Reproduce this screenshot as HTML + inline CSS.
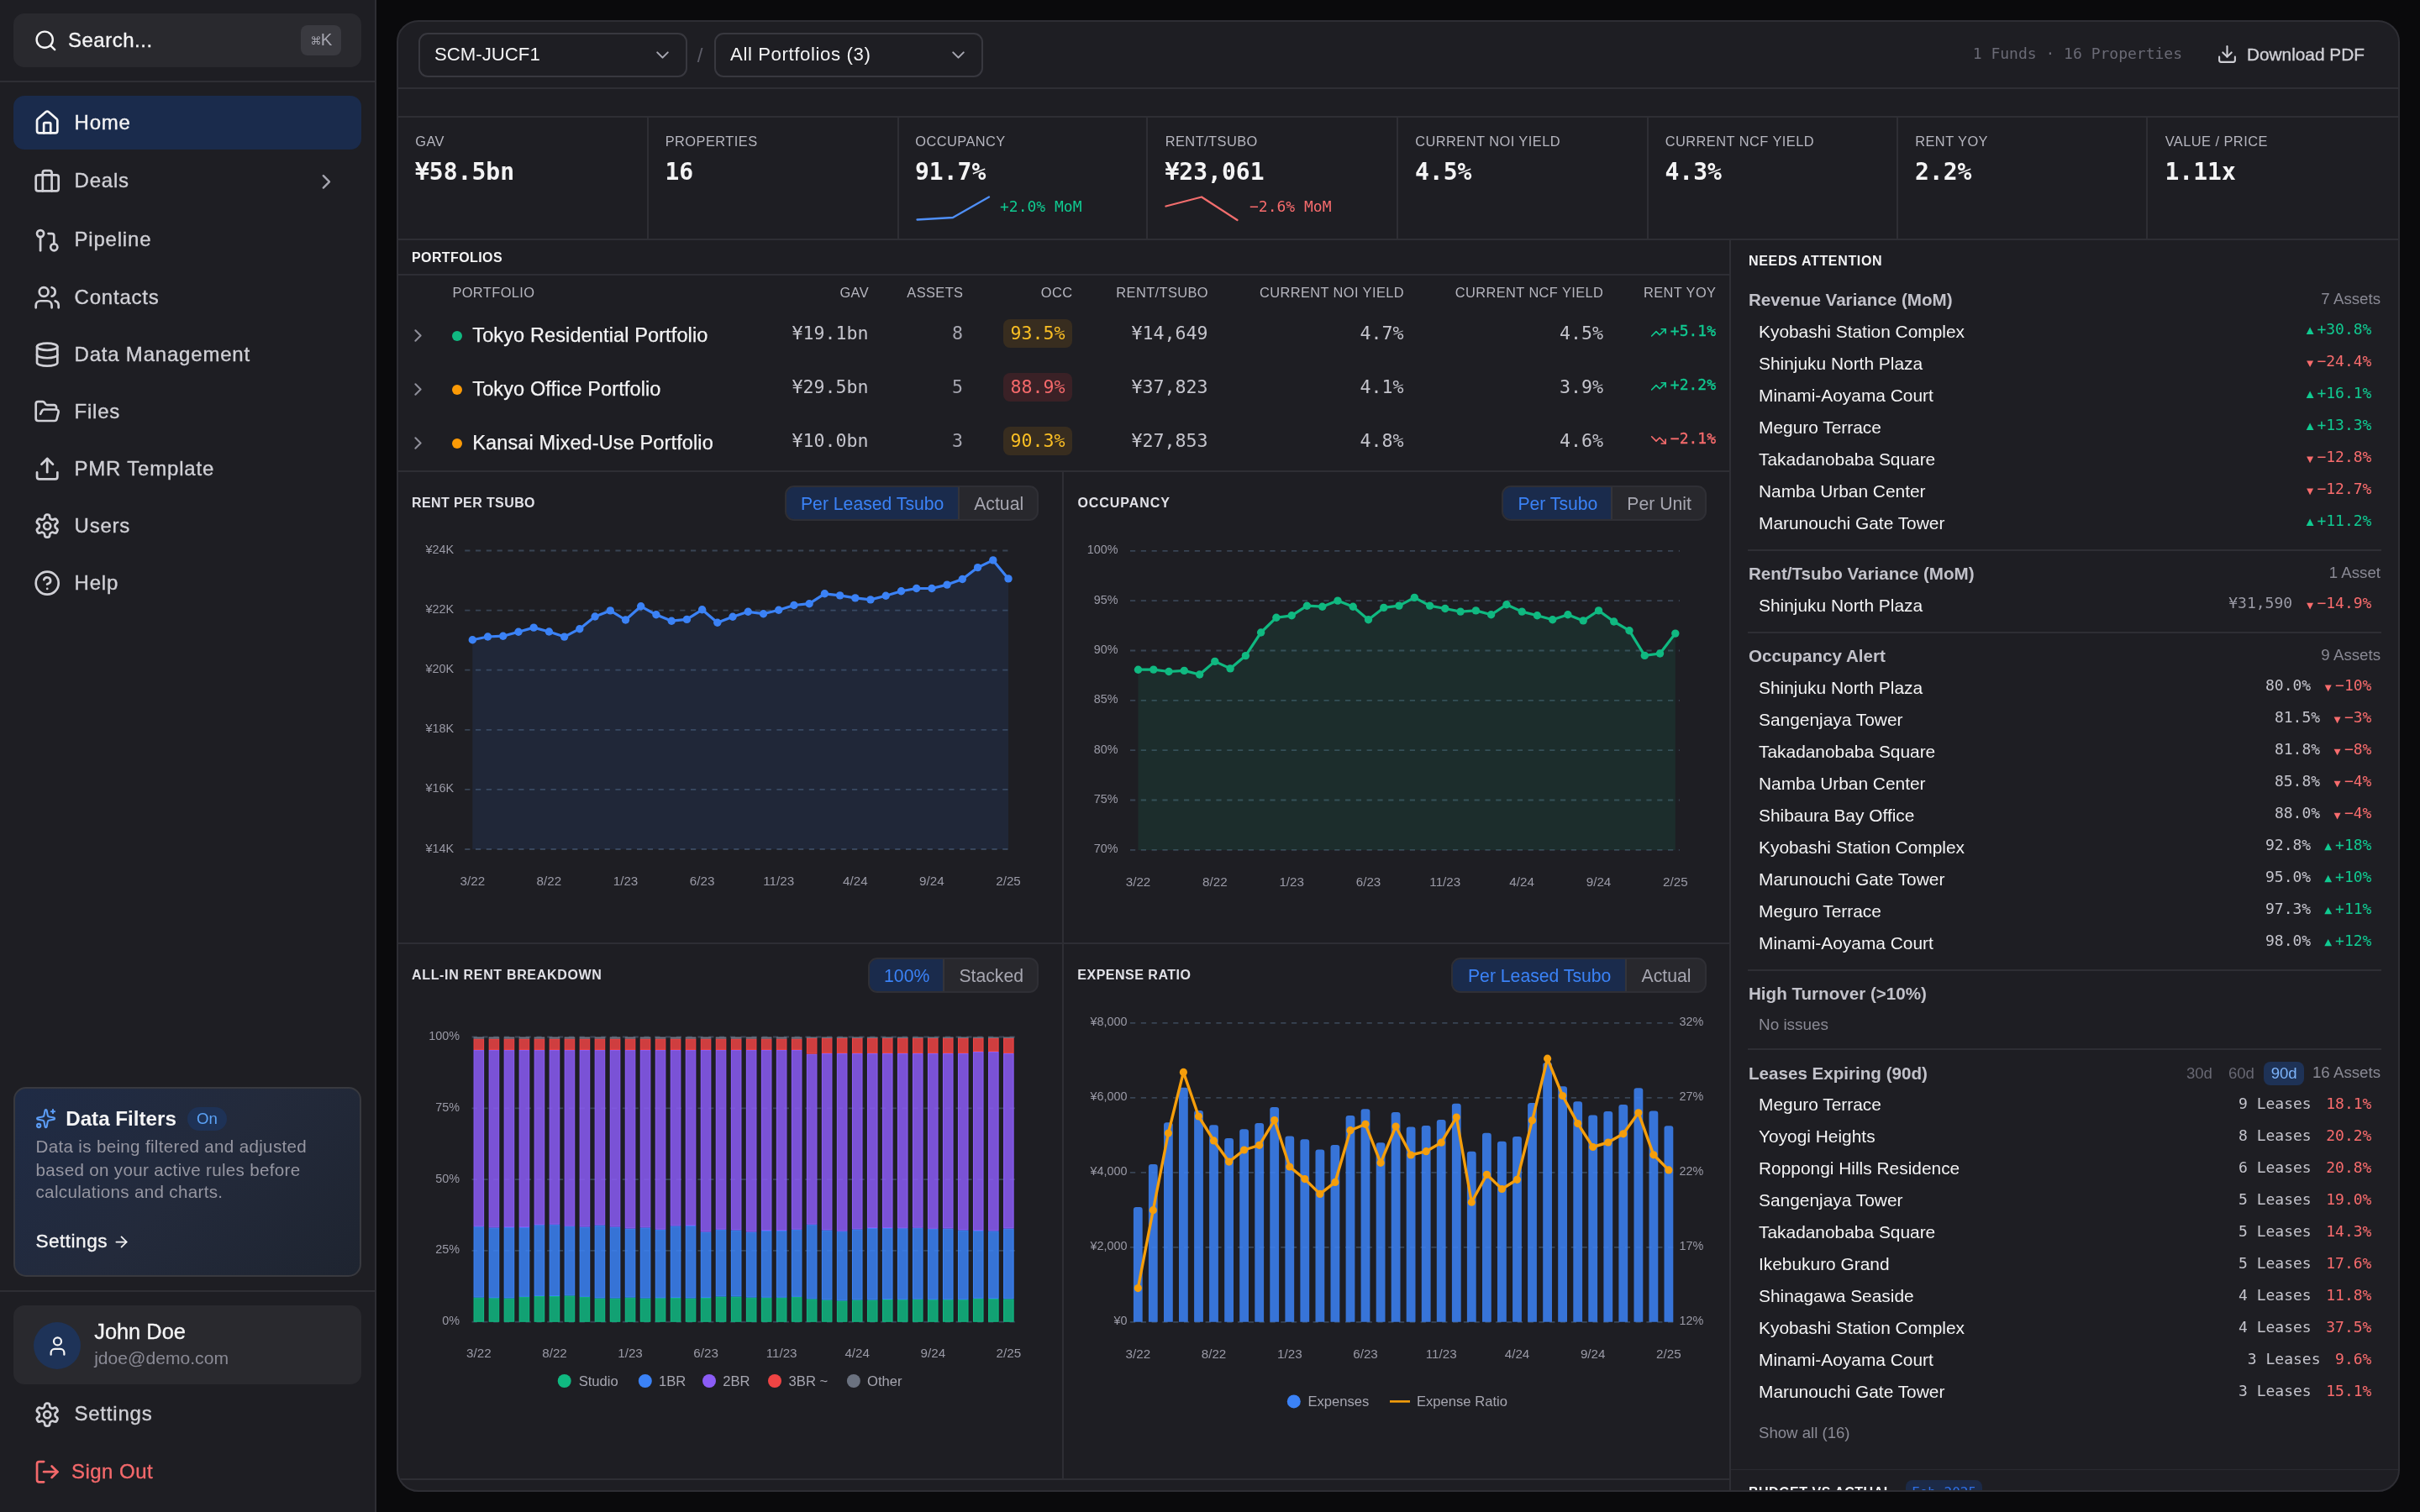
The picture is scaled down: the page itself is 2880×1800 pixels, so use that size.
<!DOCTYPE html>
<html lang="en"><head><meta charset="utf-8"><title>Portfolio Dashboard</title>
<style>
html,body{margin:0;padding:0;}
body{width:2880px;height:1800px;overflow:hidden;background:#0a0a0c;font-family:"Liberation Sans", sans-serif;position:relative;}
.b{position:absolute;}
.t{position:absolute;white-space:nowrap;}
#root{position:absolute;left:0;top:0;width:2880px;height:1800px;will-change:transform;}
</style></head><body><div id="root">
<div class="b" style="left:0.0px;top:0.0px;width:446.0px;height:1800.0px;background:#1e1e23;border-right:2px solid #2e2e34;"></div>
<div class="b" style="left:16.0px;top:16.0px;width:414.0px;height:64.0px;background:#29292e;border-radius:13px;"></div>
<svg class="b" style="left:39.6px;top:33.6px" width="28.8" height="28.8" viewBox="0 0 24 24" fill="none" stroke="#f4f4f5" stroke-width="2" stroke-linecap="round" stroke-linejoin="round"><circle cx="11" cy="11" r="8"/><path d="m21 21-4.3-4.3"/></svg>
<span class="t" style="top:31.5px;font-size:24px;line-height:31px;color:#f4f4f5;letter-spacing:0.5px;left:81.0px;-webkit-text-stroke:0.35px currentColor;">Search...</span>
<div class="b" style="left:358.0px;top:30.0px;width:48.0px;height:36.0px;background:#3a3a40;border-radius:8px;"></div>
<span class="t" style="top:40.0px;font-size:13px;line-height:17px;color:#a6a6b0;left:375.7px;transform:translateX(-50%);font-family:'DejaVu Sans','Liberation Sans',sans-serif;">⌘</span>
<span class="t" style="top:33.8px;font-size:20.4px;line-height:27px;color:#a6a6b0;left:388.6px;transform:translateX(-50%);">K</span>
<div class="b" style="left:0.0px;top:96.0px;width:446.0px;height:2.0px;background:#2e2e34;"></div>
<div class="b" style="left:16.0px;top:114.0px;width:414.0px;height:64.0px;background:#1a2b4c;border-radius:13px;"></div>
<svg class="b" style="left:39.8px;top:129.8px" width="32.4" height="32.4" viewBox="0 0 24 24" fill="none" stroke="#f4f4f5" stroke-width="2" stroke-linecap="round" stroke-linejoin="round"><path d="M15 21v-8a1 1 0 0 0-1-1h-4a1 1 0 0 0-1 1v8"/><path d="M3 10a2 2 0 0 1 .709-1.528l7-5.999a2 2 0 0 1 2.582 0l7 5.999A2 2 0 0 1 21 10v9a2 2 0 0 1-2 2H5a2 2 0 0 1-2-2z"/></svg>
<span class="t" style="top:129.5px;font-size:24px;line-height:31px;color:#f4f4f5;letter-spacing:0.8px;left:88.5px;-webkit-text-stroke:0.35px currentColor;">Home</span>
<svg class="b" style="left:39.8px;top:198.5px" width="32.4" height="32.4" viewBox="0 0 24 24" fill="none" stroke="#d0d0d6" stroke-width="2" stroke-linecap="round" stroke-linejoin="round"><rect width="20" height="14" x="2" y="7" rx="2" ry="2"/><path d="M16 21V5a2 2 0 0 0-2-2h-4a2 2 0 0 0-2 2v16"/></svg>
<span class="t" style="top:198.9px;font-size:24px;line-height:31px;color:#d0d0d6;letter-spacing:0.8px;left:88.5px;-webkit-text-stroke:0.35px currentColor;">Deals</span>
<svg class="b" style="left:39.8px;top:269.5px" width="32.4" height="32.4" viewBox="0 0 24 24" fill="none" stroke="#d0d0d6" stroke-width="2" stroke-linecap="round" stroke-linejoin="round"><circle cx="18" cy="18" r="3"/><circle cx="6" cy="6" r="3"/><path d="M13 6h3a2 2 0 0 1 2 2v7"/><line x1="6" x2="6" y1="9" y2="21"/></svg>
<span class="t" style="top:269.2px;font-size:24px;line-height:31px;color:#d0d0d6;letter-spacing:0.8px;left:88.5px;-webkit-text-stroke:0.35px currentColor;">Pipeline</span>
<svg class="b" style="left:39.8px;top:338.0px" width="32.4" height="32.4" viewBox="0 0 24 24" fill="none" stroke="#d0d0d6" stroke-width="2" stroke-linecap="round" stroke-linejoin="round"><path d="M16 21v-2a4 4 0 0 0-4-4H6a4 4 0 0 0-4 4v2"/><circle cx="9" cy="7" r="4"/><path d="M22 21v-2a4 4 0 0 0-3-3.87"/><path d="M16 3.13a4 4 0 0 1 0 7.75"/></svg>
<span class="t" style="top:337.7px;font-size:24px;line-height:31px;color:#d0d0d6;letter-spacing:0.8px;left:88.5px;-webkit-text-stroke:0.35px currentColor;">Contacts</span>
<svg class="b" style="left:39.8px;top:405.9px" width="32.4" height="32.4" viewBox="0 0 24 24" fill="none" stroke="#d0d0d6" stroke-width="2" stroke-linecap="round" stroke-linejoin="round"><ellipse cx="12" cy="5" rx="9" ry="3"/><path d="M3 5V19A9 3 0 0 0 21 19V5"/><path d="M3 12A9 3 0 0 0 21 12"/></svg>
<span class="t" style="top:405.6px;font-size:24px;line-height:31px;color:#d0d0d6;letter-spacing:0.8px;left:88.5px;-webkit-text-stroke:0.35px currentColor;">Data Management</span>
<svg class="b" style="left:39.8px;top:474.0px" width="32.4" height="32.4" viewBox="0 0 24 24" fill="none" stroke="#d0d0d6" stroke-width="2" stroke-linecap="round" stroke-linejoin="round"><path d="m6 14 1.5-2.9A2 2 0 0 1 9.24 10H20a2 2 0 0 1 1.94 2.5l-1.54 6a2 2 0 0 1-1.95 1.5H4a2 2 0 0 1-2-2V5a2 2 0 0 1 2-2h3.9a2 2 0 0 1 1.69.9l.81 1.2a2 2 0 0 0 1.67.9H18a2 2 0 0 1 2 2v2"/></svg>
<span class="t" style="top:473.7px;font-size:24px;line-height:31px;color:#d0d0d6;letter-spacing:0.8px;left:88.5px;-webkit-text-stroke:0.35px currentColor;">Files</span>
<svg class="b" style="left:39.8px;top:542.1px" width="32.4" height="32.4" viewBox="0 0 24 24" fill="none" stroke="#d0d0d6" stroke-width="2" stroke-linecap="round" stroke-linejoin="round"><path d="M21 15v4a2 2 0 0 1-2 2H5a2 2 0 0 1-2-2v-4"/><polyline points="17 8 12 3 7 8"/><line x1="12" x2="12" y1="3" y2="15"/></svg>
<span class="t" style="top:541.8px;font-size:24px;line-height:31px;color:#d0d0d6;letter-spacing:0.8px;left:88.5px;-webkit-text-stroke:0.35px currentColor;">PMR Template</span>
<svg class="b" style="left:39.8px;top:610.1px" width="32.4" height="32.4" viewBox="0 0 24 24" fill="none" stroke="#d0d0d6" stroke-width="2" stroke-linecap="round" stroke-linejoin="round"><path d="M12.22 2h-.44a2 2 0 0 0-2 2v.18a2 2 0 0 1-1 1.73l-.43.25a2 2 0 0 1-2 0l-.15-.08a2 2 0 0 0-2.73.73l-.22.38a2 2 0 0 0 .73 2.73l.15.1a2 2 0 0 1 1 1.72v.51a2 2 0 0 1-1 1.74l-.15.09a2 2 0 0 0-.73 2.73l.22.38a2 2 0 0 0 2.73.73l.15-.08a2 2 0 0 1 2 0l.43.25a2 2 0 0 1 1 1.73V20a2 2 0 0 0 2 2h.44a2 2 0 0 0 2-2v-.18a2 2 0 0 1 1-1.73l.43-.25a2 2 0 0 1 2 0l.15.08a2 2 0 0 0 2.73-.73l.22-.39a2 2 0 0 0-.73-2.73l-.15-.08a2 2 0 0 1-1-1.74v-.5a2 2 0 0 1 1-1.74l.15-.09a2 2 0 0 0 .73-2.73l-.22-.38a2 2 0 0 0-2.73-.73l-.15.08a2 2 0 0 1-2 0l-.43-.25a2 2 0 0 1-1-1.73V4a2 2 0 0 0-2-2z"/><circle cx="12" cy="12" r="3"/></svg>
<span class="t" style="top:609.8px;font-size:24px;line-height:31px;color:#d0d0d6;letter-spacing:0.8px;left:88.5px;-webkit-text-stroke:0.35px currentColor;">Users</span>
<svg class="b" style="left:39.8px;top:678.1px" width="32.4" height="32.4" viewBox="0 0 24 24" fill="none" stroke="#d0d0d6" stroke-width="2" stroke-linecap="round" stroke-linejoin="round"><circle cx="12" cy="12" r="10"/><path d="M9.09 9a3 3 0 0 1 5.83 1c0 2-3 3-3 3"/><path d="M12 17h.01"/></svg>
<span class="t" style="top:677.8px;font-size:24px;line-height:31px;color:#d0d0d6;letter-spacing:0.8px;left:88.5px;-webkit-text-stroke:0.35px currentColor;">Help</span>
<svg class="b" style="left:373.6px;top:201.6px" width="28.8" height="28.8" viewBox="0 0 24 24" fill="none" stroke="#a6a6b0" stroke-width="2" stroke-linecap="round" stroke-linejoin="round"><path d="m9 18 6-6-6-6"/></svg>
<div class="b" style="left:16.0px;top:1294.0px;width:414.0px;height:226.0px;box-sizing:border-box;border:2px solid #38393f;border-radius:15px;background:linear-gradient(135deg,#1f2b45 0%,#232a3b 50%,#1e2430 100%);"></div>
<svg class="b" style="left:41.6px;top:1319.4px" width="25.2" height="25.2" viewBox="0 0 24 24" fill="none" stroke="#5b9cf5" stroke-width="2" stroke-linecap="round" stroke-linejoin="round"><path d="M11.017 2.814a1 1 0 0 1 1.966 0l1.051 5.558a2 2 0 0 0 1.594 1.594l5.558 1.051a1 1 0 0 1 0 1.966l-5.558 1.051a2 2 0 0 0-1.594 1.594l-1.051 5.558a1 1 0 0 1-1.966 0l-1.051-5.558a2 2 0 0 0-1.594-1.594l-5.558-1.051a1 1 0 0 1 0-1.966l5.558-1.051a2 2 0 0 0 1.594-1.594z"/><path d="M20 2v4"/><path d="M22 4h-4"/><circle cx="4" cy="20" r="2"/></svg>
<span class="t" style="top:1315.5px;font-size:24.2px;line-height:31px;color:#f4f4f5;font-weight:700;left:78.2px;">Data Filters</span>
<div class="b" style="left:222.6px;top:1318.4px;width:47.6px;height:27.8px;background:#1e3256;border-radius:14px;"></div>
<span class="t" style="top:1320.2px;font-size:18.6px;line-height:24px;color:#5ba2f7;left:246.4px;transform:translateX(-50%);">On</span>
<span class="t" style="top:1351.1px;font-size:20.6px;line-height:27px;color:#9696a1;letter-spacing:0.32px;left:42.5px;">Data is being filtered and adjusted</span>
<span class="t" style="top:1378.9px;font-size:20.6px;line-height:27px;color:#9696a1;letter-spacing:0.32px;left:42.5px;">based on your active rules before</span>
<span class="t" style="top:1405.3px;font-size:20.6px;line-height:27px;color:#9696a1;letter-spacing:0.32px;left:42.5px;">calculations and charts.</span>
<span class="t" style="top:1462.7px;font-size:22.6px;line-height:29px;color:#f4f4f5;letter-spacing:0.5px;left:42.4px;-webkit-text-stroke:0.35px currentColor;">Settings</span>
<svg class="b" style="left:133.7px;top:1467.8px" width="21" height="21" viewBox="0 0 24 24" fill="none" stroke="#f4f4f5" stroke-width="2" stroke-linecap="round" stroke-linejoin="round"><path d="M5 12h14"/><path d="m12 5 7 7-7 7"/></svg>
<div class="b" style="left:0.0px;top:1536.0px;width:446.0px;height:2.0px;background:#2e2e34;"></div>
<div class="b" style="left:16.0px;top:1554.0px;width:414.0px;height:94.0px;background:#29292e;border-radius:13px;"></div>
<div class="b" style="left:40.0px;top:1574.0px;width:56.0px;height:56.0px;background:#1e3358;border-radius:50%;"></div>
<svg class="b" style="left:54.5px;top:1588.5px" width="27" height="27" viewBox="0 0 24 24" fill="none" stroke="#f4f4f5" stroke-width="2" stroke-linecap="round" stroke-linejoin="round"><path d="M19 21v-2a4 4 0 0 0-4-4H9a4 4 0 0 0-4 4v2"/><circle cx="12" cy="7" r="4"/></svg>
<span class="t" style="top:1569.1px;font-size:25.4px;line-height:33px;color:#f4f4f5;left:112.2px;-webkit-text-stroke:0.35px currentColor;">John Doe</span>
<span class="t" style="top:1602.5px;font-size:21.1px;line-height:27px;color:#8a8a95;left:112.2px;">jdoe@demo.com</span>
<svg class="b" style="left:39.8px;top:1667.5px" width="32.4" height="32.4" viewBox="0 0 24 24" fill="none" stroke="#d0d0d6" stroke-width="2" stroke-linecap="round" stroke-linejoin="round"><path d="M12.22 2h-.44a2 2 0 0 0-2 2v.18a2 2 0 0 1-1 1.73l-.43.25a2 2 0 0 1-2 0l-.15-.08a2 2 0 0 0-2.73.73l-.22.38a2 2 0 0 0 .73 2.73l.15.1a2 2 0 0 1 1 1.72v.51a2 2 0 0 1-1 1.74l-.15.09a2 2 0 0 0-.73 2.73l.22.38a2 2 0 0 0 2.73.73l.15-.08a2 2 0 0 1 2 0l.43.25a2 2 0 0 1 1 1.73V20a2 2 0 0 0 2 2h.44a2 2 0 0 0 2-2v-.18a2 2 0 0 1 1-1.73l.43-.25a2 2 0 0 1 2 0l.15.08a2 2 0 0 0 2.73-.73l.22-.39a2 2 0 0 0-.73-2.73l-.15-.08a2 2 0 0 1-1-1.74v-.5a2 2 0 0 1 1-1.74l.15-.09a2 2 0 0 0 .73-2.73l-.22-.38a2 2 0 0 0-2.73-.73l-.15.08a2 2 0 0 1-2 0l-.43-.25a2 2 0 0 1-1-1.73V4a2 2 0 0 0-2-2z"/><circle cx="12" cy="12" r="3"/></svg>
<span class="t" style="top:1667.2px;font-size:24px;line-height:31px;color:#d0d0d6;letter-spacing:0.8px;left:88.4px;-webkit-text-stroke:0.35px currentColor;">Settings</span>
<svg class="b" style="left:39.8px;top:1735.8px" width="32.4" height="32.4" viewBox="0 0 24 24" fill="none" stroke="#f4696b" stroke-width="2" stroke-linecap="round" stroke-linejoin="round"><path d="M9 21H5a2 2 0 0 1-2-2V5a2 2 0 0 1 2-2h4"/><polyline points="16 17 21 12 16 7"/><line x1="21" x2="9" y1="12" y2="12"/></svg>
<span class="t" style="top:1735.5px;font-size:24px;line-height:31px;color:#f4696b;letter-spacing:0.5px;left:84.9px;-webkit-text-stroke:0.35px currentColor;">Sign Out</span>
<div class="b" style="left:472.0px;top:24.0px;width:2384.0px;height:1752.0px;box-sizing:border-box;background:#1e1e23;border:2px solid #2e2e34;border-radius:26px;"></div>
<div class="b" id="panel" style="left:474px;top:26px;width:2380px;height:1748px;border-radius:24px;overflow:hidden;">
<div class="b" style="left:-474px;top:-26px;width:2880px;height:1800px;">
<div class="b" style="left:474.0px;top:104.0px;width:2380.0px;height:2.0px;background:#2e2e34;"></div>
<div class="b" style="left:474.0px;top:138.0px;width:2380.0px;height:2.0px;background:#2e2e34;"></div>
<div class="b" style="left:474.0px;top:284.0px;width:2380.0px;height:2.0px;background:#2e2e34;"></div>
<div class="b" style="left:498.0px;top:38.5px;width:320.0px;height:53.0px;box-sizing:border-box;border:2px solid #38383f;border-radius:11px;"></div>
<span class="t" style="top:49.5px;font-size:22.2px;line-height:29px;color:#f4f4f5;left:517.0px;">SCM-JUCF1</span>
<svg class="b" style="left:775.5px;top:52.5px" width="25" height="25" viewBox="0 0 24 24" fill="none" stroke="#a6a6b0" stroke-width="2" stroke-linecap="round" stroke-linejoin="round"><path d="m6 9 6 6 6-6"/></svg>
<span class="t" style="top:49.5px;font-size:24px;line-height:31px;color:#5d5d68;left:833.0px;transform:translateX(-50%);">/</span>
<div class="b" style="left:850.0px;top:38.5px;width:320.0px;height:53.0px;box-sizing:border-box;border:2px solid #38383f;border-radius:11px;"></div>
<span class="t" style="top:49.5px;font-size:22.2px;line-height:29px;color:#f4f4f5;letter-spacing:0.6px;left:869.0px;">All Portfolios (3)</span>
<svg class="b" style="left:1127.5px;top:52.5px" width="25" height="25" viewBox="0 0 24 24" fill="none" stroke="#a6a6b0" stroke-width="2" stroke-linecap="round" stroke-linejoin="round"><path d="m6 9 6 6 6-6"/></svg>
<span class="t" style="top:51.5px;font-size:18px;line-height:23px;color:#6a6a75;font-family:'DejaVu Sans Mono','Liberation Mono',monospace;right:283.0px;">1 Funds · 16 Properties</span>
<svg class="b" style="left:2637.5px;top:51.5px" width="25" height="25" viewBox="0 0 24 24" fill="none" stroke="#d0d0d6" stroke-width="2" stroke-linecap="round" stroke-linejoin="round"><path d="M21 15v4a2 2 0 0 1-2 2H5a2 2 0 0 1-2-2v-4"/><polyline points="7 10 12 15 17 10"/><line x1="12" x2="12" y1="15" y2="3"/></svg>
<span class="t" style="top:51.0px;font-size:20.8px;line-height:27px;color:#d0d0d6;left:2674.0px;-webkit-text-stroke:0.35px currentColor;">Download PDF</span>
<span class="t" style="top:157.5px;font-size:16.4px;line-height:21px;color:#b6b6bf;letter-spacing:0.45px;left:494.2px;">GAV</span>
<span class="t" style="top:187.0px;font-size:28px;line-height:36px;color:#f4f4f5;font-weight:700;font-family:'DejaVu Sans Mono','Liberation Mono',monospace;left:494.0px;">¥58.5bn</span>
<div class="b" style="left:769.7px;top:140.0px;width:2.0px;height:144.0px;background:#2e2e34;"></div>
<span class="t" style="top:157.5px;font-size:16.4px;line-height:21px;color:#b6b6bf;letter-spacing:0.45px;left:791.7px;">PROPERTIES</span>
<span class="t" style="top:187.0px;font-size:28px;line-height:36px;color:#f4f4f5;font-weight:700;font-family:'DejaVu Sans Mono','Liberation Mono',monospace;left:791.5px;">16</span>
<div class="b" style="left:1068.2px;top:140.0px;width:2.0px;height:144.0px;background:#2e2e34;"></div>
<span class="t" style="top:157.5px;font-size:16.4px;line-height:21px;color:#b6b6bf;letter-spacing:0.45px;left:1089.2px;">OCCUPANCY</span>
<span class="t" style="top:187.0px;font-size:28px;line-height:36px;color:#f4f4f5;font-weight:700;font-family:'DejaVu Sans Mono','Liberation Mono',monospace;left:1089.0px;">91.7%</span>
<div class="b" style="left:1364.1px;top:140.0px;width:2.0px;height:144.0px;background:#2e2e34;"></div>
<span class="t" style="top:157.5px;font-size:16.4px;line-height:21px;color:#b6b6bf;letter-spacing:0.45px;left:1386.7px;">RENT/TSUBO</span>
<span class="t" style="top:187.0px;font-size:28px;line-height:36px;color:#f4f4f5;font-weight:700;font-family:'DejaVu Sans Mono','Liberation Mono',monospace;left:1386.5px;">¥23,061</span>
<div class="b" style="left:1661.8px;top:140.0px;width:2.0px;height:144.0px;background:#2e2e34;"></div>
<span class="t" style="top:157.5px;font-size:16.4px;line-height:21px;color:#b6b6bf;letter-spacing:0.45px;left:1684.2px;">CURRENT NOI YIELD</span>
<span class="t" style="top:187.0px;font-size:28px;line-height:36px;color:#f4f4f5;font-weight:700;font-family:'DejaVu Sans Mono','Liberation Mono',monospace;left:1684.0px;">4.5%</span>
<div class="b" style="left:1959.5px;top:140.0px;width:2.0px;height:144.0px;background:#2e2e34;"></div>
<span class="t" style="top:157.5px;font-size:16.4px;line-height:21px;color:#b6b6bf;letter-spacing:0.45px;left:1981.7px;">CURRENT NCF YIELD</span>
<span class="t" style="top:187.0px;font-size:28px;line-height:36px;color:#f4f4f5;font-weight:700;font-family:'DejaVu Sans Mono','Liberation Mono',monospace;left:1981.5px;">4.3%</span>
<div class="b" style="left:2257.2px;top:140.0px;width:2.0px;height:144.0px;background:#2e2e34;"></div>
<span class="t" style="top:157.5px;font-size:16.4px;line-height:21px;color:#b6b6bf;letter-spacing:0.45px;left:2279.2px;">RENT YOY</span>
<span class="t" style="top:187.0px;font-size:28px;line-height:36px;color:#f4f4f5;font-weight:700;font-family:'DejaVu Sans Mono','Liberation Mono',monospace;left:2279.0px;">2.2%</span>
<div class="b" style="left:2553.7px;top:140.0px;width:2.0px;height:144.0px;background:#2e2e34;"></div>
<span class="t" style="top:157.5px;font-size:16.4px;line-height:21px;color:#b6b6bf;letter-spacing:0.45px;left:2576.7px;">VALUE / PRICE</span>
<span class="t" style="top:187.0px;font-size:28px;line-height:36px;color:#f4f4f5;font-weight:700;font-family:'DejaVu Sans Mono','Liberation Mono',monospace;left:2576.5px;">1.11x</span>
<svg class="b" style="left:0;top:0" width="2880" height="300" fill="none" stroke-linecap="round" stroke-linejoin="round" stroke-width="2.3"><polyline stroke="#4f8ff7" points="1091.5,261.5 1134,259 1177,234.5"/><polyline stroke="#f26d6d" points="1387.5,245.5 1430,234.5 1472.5,262"/></svg>
<span class="t" style="top:233.5px;font-size:18px;line-height:23px;color:#10ca91;font-family:'DejaVu Sans Mono','Liberation Mono',monospace;left:1190.0px;">+2.0% MoM</span>
<span class="t" style="top:233.5px;font-size:18px;line-height:23px;color:#f86c6d;font-family:'DejaVu Sans Mono','Liberation Mono',monospace;left:1487.0px;">−2.6% MoM</span>
<div class="b" style="left:2058.0px;top:286.0px;width:2.0px;height:1490.0px;background:#2e2e34;"></div>
<span class="t" style="top:295.8px;font-size:16px;line-height:21px;color:#f4f4f5;font-weight:700;letter-spacing:0.4px;left:490.0px;">PORTFOLIOS</span>
<div class="b" style="left:474.0px;top:326.0px;width:1584.0px;height:2.0px;background:#2e2e34;"></div>
<span class="t" style="top:337.9px;font-size:16.4px;line-height:21px;color:#b6b6bf;letter-spacing:0.4px;left:538.4px;">PORTFOLIO</span>
<span class="t" style="top:337.9px;font-size:16.4px;line-height:21px;color:#b6b6bf;letter-spacing:0.4px;right:1846.0px;">GAV</span>
<span class="t" style="top:337.9px;font-size:16.4px;line-height:21px;color:#b6b6bf;letter-spacing:0.4px;right:1733.6px;">ASSETS</span>
<span class="t" style="top:337.9px;font-size:16.4px;line-height:21px;color:#b6b6bf;letter-spacing:0.4px;right:1603.6px;">OCC</span>
<span class="t" style="top:337.9px;font-size:16.4px;line-height:21px;color:#b6b6bf;letter-spacing:0.4px;right:1442.0px;">RENT/TSUBO</span>
<span class="t" style="top:337.9px;font-size:16.4px;line-height:21px;color:#b6b6bf;letter-spacing:0.4px;right:1209.0px;">CURRENT NOI YIELD</span>
<span class="t" style="top:337.9px;font-size:16.4px;line-height:21px;color:#b6b6bf;letter-spacing:0.4px;right:971.7px;">CURRENT NCF YIELD</span>
<span class="t" style="top:337.9px;font-size:16.4px;line-height:21px;color:#b6b6bf;letter-spacing:0.4px;right:837.6px;">RENT YOY</span>
<svg class="b" style="left:484.9px;top:386.7px" width="25" height="25" viewBox="0 0 24 24" fill="none" stroke="#8e8e99" stroke-width="2" stroke-linecap="round" stroke-linejoin="round"><path d="m9 18 6-6-6-6"/></svg>
<div class="b" style="left:538.0px;top:394.0px;width:12.0px;height:12.0px;background:#10b981;border-radius:50%;"></div>
<span class="t" style="top:383.9px;font-size:23.5px;line-height:31px;color:#f4f4f5;letter-spacing:0.12px;left:562.3px;-webkit-text-stroke:0.25px currentColor;">Tokyo Residential Portfolio</span>
<span class="t" style="top:383.2px;font-size:21.6px;line-height:28px;color:#c4c4cc;font-family:'DejaVu Sans Mono','Liberation Mono',monospace;right:1846.4px;">¥19.1bn</span>
<span class="t" style="top:383.2px;font-size:21.6px;line-height:28px;color:#a6a6b0;font-family:'DejaVu Sans Mono','Liberation Mono',monospace;right:1734.0px;">8</span>
<div class="b" style="left:1194.0px;top:380.2px;width:82.0px;height:34.0px;background:#382d1f;border-radius:8px;"></div>
<span class="t" style="top:383.2px;font-size:21.6px;line-height:28px;color:#fbbf24;font-family:'DejaVu Sans Mono','Liberation Mono',monospace;left:1235.0px;transform:translateX(-50%);">93.5%</span>
<span class="t" style="top:383.2px;font-size:21.6px;line-height:28px;color:#c4c4cc;font-family:'DejaVu Sans Mono','Liberation Mono',monospace;right:1442.4px;">¥14,649</span>
<span class="t" style="top:383.2px;font-size:21.6px;line-height:28px;color:#c4c4cc;font-family:'DejaVu Sans Mono','Liberation Mono',monospace;right:1209.4px;">4.7%</span>
<span class="t" style="top:383.2px;font-size:21.6px;line-height:28px;color:#c4c4cc;font-family:'DejaVu Sans Mono','Liberation Mono',monospace;right:972.1px;">4.5%</span>
<svg class="b" style="left:1964.4px;top:386.1px" width="19.8" height="19.8" viewBox="0 0 24 24" fill="none" stroke="#10ca91" stroke-width="2" stroke-linecap="round" stroke-linejoin="round"><polyline points="22 7 13.5 15.5 8.5 10.5 2 17"/><polyline points="16 7 22 7 22 13"/></svg>
<span class="t" style="top:381.7px;font-size:18px;line-height:23px;color:#10ca91;font-family:'DejaVu Sans Mono','Liberation Mono',monospace;right:838.0px;-webkit-text-stroke:0.3px currentColor;">+5.1%</span>
<svg class="b" style="left:484.9px;top:450.8px" width="25" height="25" viewBox="0 0 24 24" fill="none" stroke="#8e8e99" stroke-width="2" stroke-linecap="round" stroke-linejoin="round"><path d="m9 18 6-6-6-6"/></svg>
<div class="b" style="left:538.0px;top:458.1px;width:12.0px;height:12.0px;background:#fb9a06;border-radius:50%;"></div>
<span class="t" style="top:448.0px;font-size:23.5px;line-height:31px;color:#f4f4f5;letter-spacing:0.12px;left:562.3px;-webkit-text-stroke:0.25px currentColor;">Tokyo Office Portfolio</span>
<span class="t" style="top:447.3px;font-size:21.6px;line-height:28px;color:#c4c4cc;font-family:'DejaVu Sans Mono','Liberation Mono',monospace;right:1846.4px;">¥29.5bn</span>
<span class="t" style="top:447.3px;font-size:21.6px;line-height:28px;color:#a6a6b0;font-family:'DejaVu Sans Mono','Liberation Mono',monospace;right:1734.0px;">5</span>
<div class="b" style="left:1194.0px;top:444.3px;width:82.0px;height:34.0px;background:#3a2126;border-radius:8px;"></div>
<span class="t" style="top:447.3px;font-size:21.6px;line-height:28px;color:#f4696b;font-family:'DejaVu Sans Mono','Liberation Mono',monospace;left:1235.0px;transform:translateX(-50%);">88.9%</span>
<span class="t" style="top:447.3px;font-size:21.6px;line-height:28px;color:#c4c4cc;font-family:'DejaVu Sans Mono','Liberation Mono',monospace;right:1442.4px;">¥37,823</span>
<span class="t" style="top:447.3px;font-size:21.6px;line-height:28px;color:#c4c4cc;font-family:'DejaVu Sans Mono','Liberation Mono',monospace;right:1209.4px;">4.1%</span>
<span class="t" style="top:447.3px;font-size:21.6px;line-height:28px;color:#c4c4cc;font-family:'DejaVu Sans Mono','Liberation Mono',monospace;right:972.1px;">3.9%</span>
<svg class="b" style="left:1964.4px;top:450.2px" width="19.8" height="19.8" viewBox="0 0 24 24" fill="none" stroke="#10ca91" stroke-width="2" stroke-linecap="round" stroke-linejoin="round"><polyline points="22 7 13.5 15.5 8.5 10.5 2 17"/><polyline points="16 7 22 7 22 13"/></svg>
<span class="t" style="top:445.8px;font-size:18px;line-height:23px;color:#10ca91;font-family:'DejaVu Sans Mono','Liberation Mono',monospace;right:838.0px;-webkit-text-stroke:0.3px currentColor;">+2.2%</span>
<svg class="b" style="left:484.9px;top:514.9px" width="25" height="25" viewBox="0 0 24 24" fill="none" stroke="#8e8e99" stroke-width="2" stroke-linecap="round" stroke-linejoin="round"><path d="m9 18 6-6-6-6"/></svg>
<div class="b" style="left:538.0px;top:522.2px;width:12.0px;height:12.0px;background:#fb9a06;border-radius:50%;"></div>
<span class="t" style="top:512.1px;font-size:23.5px;line-height:31px;color:#f4f4f5;letter-spacing:0.12px;left:562.3px;-webkit-text-stroke:0.25px currentColor;">Kansai Mixed-Use Portfolio</span>
<span class="t" style="top:511.4px;font-size:21.6px;line-height:28px;color:#c4c4cc;font-family:'DejaVu Sans Mono','Liberation Mono',monospace;right:1846.4px;">¥10.0bn</span>
<span class="t" style="top:511.4px;font-size:21.6px;line-height:28px;color:#a6a6b0;font-family:'DejaVu Sans Mono','Liberation Mono',monospace;right:1734.0px;">3</span>
<div class="b" style="left:1194.0px;top:508.4px;width:82.0px;height:34.0px;background:#382d1f;border-radius:8px;"></div>
<span class="t" style="top:511.4px;font-size:21.6px;line-height:28px;color:#fbbf24;font-family:'DejaVu Sans Mono','Liberation Mono',monospace;left:1235.0px;transform:translateX(-50%);">90.3%</span>
<span class="t" style="top:511.4px;font-size:21.6px;line-height:28px;color:#c4c4cc;font-family:'DejaVu Sans Mono','Liberation Mono',monospace;right:1442.4px;">¥27,853</span>
<span class="t" style="top:511.4px;font-size:21.6px;line-height:28px;color:#c4c4cc;font-family:'DejaVu Sans Mono','Liberation Mono',monospace;right:1209.4px;">4.8%</span>
<span class="t" style="top:511.4px;font-size:21.6px;line-height:28px;color:#c4c4cc;font-family:'DejaVu Sans Mono','Liberation Mono',monospace;right:972.1px;">4.6%</span>
<svg class="b" style="left:1964.4px;top:514.3px" width="19.8" height="19.8" viewBox="0 0 24 24" fill="none" stroke="#f86c6d" stroke-width="2" stroke-linecap="round" stroke-linejoin="round"><polyline points="22 17 13.5 8.5 8.5 13.5 2 7"/><polyline points="16 17 22 17 22 11"/></svg>
<span class="t" style="top:509.9px;font-size:18px;line-height:23px;color:#f86c6d;font-family:'DejaVu Sans Mono','Liberation Mono',monospace;right:838.0px;-webkit-text-stroke:0.3px currentColor;">−2.1%</span>
<div class="b" style="left:474.0px;top:560.0px;width:1584.0px;height:2.0px;background:#2e2e34;"></div>
<div class="b" style="left:474.0px;top:1122.0px;width:1584.0px;height:2.0px;background:#2e2e34;"></div>
<div class="b" style="left:474.0px;top:1760.0px;width:1584.0px;height:2.0px;background:#2e2e34;"></div>
<div class="b" style="left:1264.0px;top:562.0px;width:2.0px;height:1198.0px;background:#2e2e34;"></div>
<span class="t" style="top:588.0px;font-size:16px;line-height:21px;color:#e2e2e8;font-weight:700;letter-spacing:0.4px;left:490.0px;">RENT PER TSUBO</span>
<div class="b" style="left:933.5px;top:577.5px;width:302.8px;height:42.6px;box-sizing:border-box;background:#28282d;border:2px solid #2f2f35;border-radius:11px;overflow:hidden;"></div>
<div class="b" style="left:935.5px;top:579.5px;width:204.5px;height:38.6px;background:#1a2b4c;border-radius:9px 0 0 9px;"></div>
<div class="b" style="left:1140.0px;top:579.5px;width:2.0px;height:38.6px;background:#34343a;"></div>
<span class="t" style="top:585.6px;font-size:21.2px;line-height:28px;color:#3b82f6;left:1038.2px;transform:translateX(-50%);">Per Leased Tsubo</span>
<span class="t" style="top:585.6px;font-size:21.2px;line-height:28px;color:#a6a6b0;left:1188.7px;transform:translateX(-50%);">Actual</span>
<span class="t" style="top:588.0px;font-size:16px;line-height:21px;color:#e2e2e8;font-weight:700;letter-spacing:0.95px;left:1282.4px;">OCCUPANCY</span>
<div class="b" style="left:1787.4px;top:577.5px;width:243.3px;height:42.6px;box-sizing:border-box;background:#28282d;border:2px solid #2f2f35;border-radius:11px;overflow:hidden;"></div>
<div class="b" style="left:1789.4px;top:579.5px;width:128.0px;height:38.6px;background:#1a2b4c;border-radius:9px 0 0 9px;"></div>
<div class="b" style="left:1917.4px;top:579.5px;width:2.0px;height:38.6px;background:#34343a;"></div>
<span class="t" style="top:585.6px;font-size:21.2px;line-height:28px;color:#3b82f6;left:1853.9px;transform:translateX(-50%);">Per Tsubo</span>
<span class="t" style="top:585.6px;font-size:21.2px;line-height:28px;color:#a6a6b0;left:1974.6px;transform:translateX(-50%);">Per Unit</span>
<span class="t" style="top:1149.8px;font-size:16px;line-height:21px;color:#e2e2e8;font-weight:700;letter-spacing:0.67px;left:490.0px;">ALL-IN RENT BREAKDOWN</span>
<div class="b" style="left:1033.4px;top:1140.2px;width:202.9px;height:41.5px;box-sizing:border-box;background:#28282d;border:2px solid #2f2f35;border-radius:11px;overflow:hidden;"></div>
<div class="b" style="left:1035.4px;top:1142.2px;width:86.6px;height:37.5px;background:#1a2b4c;border-radius:9px 0 0 9px;"></div>
<div class="b" style="left:1122.0px;top:1142.2px;width:2.0px;height:37.5px;background:#34343a;"></div>
<span class="t" style="top:1147.8px;font-size:21.2px;line-height:28px;color:#3b82f6;left:1079.2px;transform:translateX(-50%);">100%</span>
<span class="t" style="top:1147.8px;font-size:21.2px;line-height:28px;color:#a6a6b0;left:1179.7px;transform:translateX(-50%);">Stacked</span>
<span class="t" style="top:1149.8px;font-size:16px;line-height:21px;color:#e2e2e8;font-weight:700;letter-spacing:0.5px;left:1282.3px;">EXPENSE RATIO</span>
<div class="b" style="left:1727.3px;top:1140.2px;width:303.6px;height:41.5px;box-sizing:border-box;background:#28282d;border:2px solid #2f2f35;border-radius:11px;overflow:hidden;"></div>
<div class="b" style="left:1729.3px;top:1142.2px;width:204.8px;height:37.5px;background:#1a2b4c;border-radius:9px 0 0 9px;"></div>
<div class="b" style="left:1934.1px;top:1142.2px;width:2.0px;height:37.5px;background:#34343a;"></div>
<span class="t" style="top:1147.8px;font-size:21.2px;line-height:28px;color:#3b82f6;left:1832.2px;transform:translateX(-50%);">Per Leased Tsubo</span>
<span class="t" style="top:1147.8px;font-size:21.2px;line-height:28px;color:#a6a6b0;left:1983.0px;transform:translateX(-50%);">Actual</span>
<span class="t" style="top:645.0px;font-size:14.4px;line-height:19px;color:#9a9aa6;right:2340.0px;">¥24K</span>
<span class="t" style="top:716.1px;font-size:14.4px;line-height:19px;color:#9a9aa6;right:2340.0px;">¥22K</span>
<span class="t" style="top:787.2px;font-size:14.4px;line-height:19px;color:#9a9aa6;right:2340.0px;">¥20K</span>
<span class="t" style="top:858.3px;font-size:14.4px;line-height:19px;color:#9a9aa6;right:2340.0px;">¥18K</span>
<span class="t" style="top:929.4px;font-size:14.4px;line-height:19px;color:#9a9aa6;right:2340.0px;">¥16K</span>
<span class="t" style="top:1000.5px;font-size:14.4px;line-height:19px;color:#9a9aa6;right:2340.0px;">¥14K</span>
<span class="t" style="top:1039.0px;font-size:15.2px;line-height:20px;color:#9a9aa6;left:562.3px;transform:translateX(-50%);">3/22</span>
<span class="t" style="top:1039.0px;font-size:15.2px;line-height:20px;color:#9a9aa6;left:653.4px;transform:translateX(-50%);">8/22</span>
<span class="t" style="top:1039.0px;font-size:15.2px;line-height:20px;color:#9a9aa6;left:744.5px;transform:translateX(-50%);">1/23</span>
<span class="t" style="top:1039.0px;font-size:15.2px;line-height:20px;color:#9a9aa6;left:835.6px;transform:translateX(-50%);">6/23</span>
<span class="t" style="top:1039.0px;font-size:15.2px;line-height:20px;color:#9a9aa6;left:926.7px;transform:translateX(-50%);">11/23</span>
<span class="t" style="top:1039.0px;font-size:15.2px;line-height:20px;color:#9a9aa6;left:1017.8px;transform:translateX(-50%);">4/24</span>
<span class="t" style="top:1039.0px;font-size:15.2px;line-height:20px;color:#9a9aa6;left:1108.9px;transform:translateX(-50%);">9/24</span>
<span class="t" style="top:1039.0px;font-size:15.2px;line-height:20px;color:#9a9aa6;left:1200.0px;transform:translateX(-50%);">2/25</span>
<span class="t" style="top:645.3px;font-size:14.4px;line-height:19px;color:#9a9aa6;right:1549.5px;">100%</span>
<span class="t" style="top:704.6px;font-size:14.4px;line-height:19px;color:#9a9aa6;right:1549.5px;">95%</span>
<span class="t" style="top:764.0px;font-size:14.4px;line-height:19px;color:#9a9aa6;right:1549.5px;">90%</span>
<span class="t" style="top:823.3px;font-size:14.4px;line-height:19px;color:#9a9aa6;right:1549.5px;">85%</span>
<span class="t" style="top:882.7px;font-size:14.4px;line-height:19px;color:#9a9aa6;right:1549.5px;">80%</span>
<span class="t" style="top:942.0px;font-size:14.4px;line-height:19px;color:#9a9aa6;right:1549.5px;">75%</span>
<span class="t" style="top:1001.4px;font-size:14.4px;line-height:19px;color:#9a9aa6;right:1549.5px;">70%</span>
<span class="t" style="top:1040.0px;font-size:15.2px;line-height:20px;color:#9a9aa6;left:1354.5px;transform:translateX(-50%);">3/22</span>
<span class="t" style="top:1040.0px;font-size:15.2px;line-height:20px;color:#9a9aa6;left:1445.8px;transform:translateX(-50%);">8/22</span>
<span class="t" style="top:1040.0px;font-size:15.2px;line-height:20px;color:#9a9aa6;left:1537.2px;transform:translateX(-50%);">1/23</span>
<span class="t" style="top:1040.0px;font-size:15.2px;line-height:20px;color:#9a9aa6;left:1628.5px;transform:translateX(-50%);">6/23</span>
<span class="t" style="top:1040.0px;font-size:15.2px;line-height:20px;color:#9a9aa6;left:1719.8px;transform:translateX(-50%);">11/23</span>
<span class="t" style="top:1040.0px;font-size:15.2px;line-height:20px;color:#9a9aa6;left:1811.1px;transform:translateX(-50%);">4/24</span>
<span class="t" style="top:1040.0px;font-size:15.2px;line-height:20px;color:#9a9aa6;left:1902.5px;transform:translateX(-50%);">9/24</span>
<span class="t" style="top:1040.0px;font-size:15.2px;line-height:20px;color:#9a9aa6;left:1993.8px;transform:translateX(-50%);">2/25</span>
<span class="t" style="top:1224.0px;font-size:14.4px;line-height:19px;color:#9a9aa6;right:2333.0px;">100%</span>
<span class="t" style="top:1308.8px;font-size:14.4px;line-height:19px;color:#9a9aa6;right:2333.0px;">75%</span>
<span class="t" style="top:1393.6px;font-size:14.4px;line-height:19px;color:#9a9aa6;right:2333.0px;">50%</span>
<span class="t" style="top:1478.4px;font-size:14.4px;line-height:19px;color:#9a9aa6;right:2333.0px;">25%</span>
<span class="t" style="top:1563.2px;font-size:14.4px;line-height:19px;color:#9a9aa6;right:2333.0px;">0%</span>
<span class="t" style="top:1601.0px;font-size:15.2px;line-height:20px;color:#9a9aa6;left:569.9px;transform:translateX(-50%);">3/22</span>
<span class="t" style="top:1601.0px;font-size:15.2px;line-height:20px;color:#9a9aa6;left:660.0px;transform:translateX(-50%);">8/22</span>
<span class="t" style="top:1601.0px;font-size:15.2px;line-height:20px;color:#9a9aa6;left:750.0px;transform:translateX(-50%);">1/23</span>
<span class="t" style="top:1601.0px;font-size:15.2px;line-height:20px;color:#9a9aa6;left:840.1px;transform:translateX(-50%);">6/23</span>
<span class="t" style="top:1601.0px;font-size:15.2px;line-height:20px;color:#9a9aa6;left:930.1px;transform:translateX(-50%);">11/23</span>
<span class="t" style="top:1601.0px;font-size:15.2px;line-height:20px;color:#9a9aa6;left:1020.2px;transform:translateX(-50%);">4/24</span>
<span class="t" style="top:1601.0px;font-size:15.2px;line-height:20px;color:#9a9aa6;left:1110.3px;transform:translateX(-50%);">9/24</span>
<span class="t" style="top:1601.0px;font-size:15.2px;line-height:20px;color:#9a9aa6;left:1200.3px;transform:translateX(-50%);">2/25</span>
<span class="t" style="top:1633.8px;font-size:16.6px;line-height:22px;color:#a6a6b0;left:688.7px;">Studio</span>
<span class="t" style="top:1633.8px;font-size:16.6px;line-height:22px;color:#a6a6b0;left:784.0px;">1BR</span>
<span class="t" style="top:1633.8px;font-size:16.6px;line-height:22px;color:#a6a6b0;left:860.2px;">2BR</span>
<span class="t" style="top:1633.8px;font-size:16.6px;line-height:22px;color:#a6a6b0;left:938.6px;">3BR ~</span>
<span class="t" style="top:1633.8px;font-size:16.6px;line-height:22px;color:#a6a6b0;left:1032.1px;">Other</span>
<span class="t" style="top:1207.4px;font-size:14.4px;line-height:19px;color:#9a9aa6;right:1538.6px;">¥8,000</span>
<span class="t" style="top:1296.4px;font-size:14.4px;line-height:19px;color:#9a9aa6;right:1538.6px;">¥6,000</span>
<span class="t" style="top:1385.3px;font-size:14.4px;line-height:19px;color:#9a9aa6;right:1538.6px;">¥4,000</span>
<span class="t" style="top:1474.3px;font-size:14.4px;line-height:19px;color:#9a9aa6;right:1538.6px;">¥2,000</span>
<span class="t" style="top:1563.3px;font-size:14.4px;line-height:19px;color:#9a9aa6;right:1538.6px;">¥0</span>
<span class="t" style="top:1207.4px;font-size:14.4px;line-height:19px;color:#9a9aa6;left:1998.6px;">32%</span>
<span class="t" style="top:1296.4px;font-size:14.4px;line-height:19px;color:#9a9aa6;left:1998.6px;">27%</span>
<span class="t" style="top:1385.3px;font-size:14.4px;line-height:19px;color:#9a9aa6;left:1998.6px;">22%</span>
<span class="t" style="top:1474.3px;font-size:14.4px;line-height:19px;color:#9a9aa6;left:1998.6px;">17%</span>
<span class="t" style="top:1563.3px;font-size:14.4px;line-height:19px;color:#9a9aa6;left:1998.6px;">12%</span>
<span class="t" style="top:1602.0px;font-size:15.2px;line-height:20px;color:#9a9aa6;left:1354.3px;transform:translateX(-50%);">3/22</span>
<span class="t" style="top:1602.0px;font-size:15.2px;line-height:20px;color:#9a9aa6;left:1444.5px;transform:translateX(-50%);">8/22</span>
<span class="t" style="top:1602.0px;font-size:15.2px;line-height:20px;color:#9a9aa6;left:1534.8px;transform:translateX(-50%);">1/23</span>
<span class="t" style="top:1602.0px;font-size:15.2px;line-height:20px;color:#9a9aa6;left:1625.0px;transform:translateX(-50%);">6/23</span>
<span class="t" style="top:1602.0px;font-size:15.2px;line-height:20px;color:#9a9aa6;left:1715.2px;transform:translateX(-50%);">11/23</span>
<span class="t" style="top:1602.0px;font-size:15.2px;line-height:20px;color:#9a9aa6;left:1805.5px;transform:translateX(-50%);">4/24</span>
<span class="t" style="top:1602.0px;font-size:15.2px;line-height:20px;color:#9a9aa6;left:1895.7px;transform:translateX(-50%);">9/24</span>
<span class="t" style="top:1602.0px;font-size:15.2px;line-height:20px;color:#9a9aa6;left:1985.9px;transform:translateX(-50%);">2/25</span>
<span class="t" style="top:1658.2px;font-size:16.6px;line-height:22px;color:#a6a6b0;left:1556.5px;">Expenses</span>
<span class="t" style="top:1658.2px;font-size:16.6px;line-height:22px;color:#a6a6b0;left:1686.0px;">Expense Ratio</span>
<svg class="b" style="left:0;top:0" width="2880" height="1800"><line x1="553.2" x2="1205.0" y1="655.5" y2="655.5" stroke="#394454" stroke-width="1.8" stroke-dasharray="6.2 6.6"/><line x1="553.2" x2="1205.0" y1="726.6" y2="726.6" stroke="#394454" stroke-width="1.8" stroke-dasharray="6.2 6.6"/><line x1="553.2" x2="1205.0" y1="797.7" y2="797.7" stroke="#394454" stroke-width="1.8" stroke-dasharray="6.2 6.6"/><line x1="553.2" x2="1205.0" y1="868.8" y2="868.8" stroke="#394454" stroke-width="1.8" stroke-dasharray="6.2 6.6"/><line x1="553.2" x2="1205.0" y1="939.9" y2="939.9" stroke="#394454" stroke-width="1.8" stroke-dasharray="6.2 6.6"/><line x1="553.2" x2="1205.0" y1="1011.0" y2="1011.0" stroke="#394454" stroke-width="1.8" stroke-dasharray="6.2 6.6"/><polygon points="562.3,1011.0 562.3,761.7 580.5,758.0 598.7,757.2 617.0,752.3 635.2,747.1 653.4,752.0 671.6,758.1 689.8,748.7 708.1,734.0 726.3,726.9 744.5,738.0 762.7,721.8 780.9,731.8 799.2,739.2 817.4,737.4 835.6,725.8 853.8,741.2 872.0,734.3 890.3,728.3 908.5,730.7 926.7,726.3 944.9,720.5 963.1,718.7 981.4,706.8 999.6,708.9 1017.8,711.9 1036.0,713.9 1054.2,709.3 1072.5,703.8 1090.7,700.5 1108.9,700.5 1127.1,696.1 1145.3,689.5 1163.6,675.6 1181.8,666.9 1200.0,688.9 1200.0,1011.0" fill="#3b82f6" fill-opacity="0.10"/><polyline points="562.3,761.7 580.5,758.0 598.7,757.2 617.0,752.3 635.2,747.1 653.4,752.0 671.6,758.1 689.8,748.7 708.1,734.0 726.3,726.9 744.5,738.0 762.7,721.8 780.9,731.8 799.2,739.2 817.4,737.4 835.6,725.8 853.8,741.2 872.0,734.3 890.3,728.3 908.5,730.7 926.7,726.3 944.9,720.5 963.1,718.7 981.4,706.8 999.6,708.9 1017.8,711.9 1036.0,713.9 1054.2,709.3 1072.5,703.8 1090.7,700.5 1108.9,700.5 1127.1,696.1 1145.3,689.5 1163.6,675.6 1181.8,666.9 1200.0,688.9" fill="none" stroke="#3b82f6" stroke-width="3.2" stroke-linejoin="round"/><circle cx="562.3" cy="761.7" r="4.7" fill="#3b82f6"/><circle cx="580.5" cy="758.0" r="4.7" fill="#3b82f6"/><circle cx="598.7" cy="757.2" r="4.7" fill="#3b82f6"/><circle cx="617.0" cy="752.3" r="4.7" fill="#3b82f6"/><circle cx="635.2" cy="747.1" r="4.7" fill="#3b82f6"/><circle cx="653.4" cy="752.0" r="4.7" fill="#3b82f6"/><circle cx="671.6" cy="758.1" r="4.7" fill="#3b82f6"/><circle cx="689.8" cy="748.7" r="4.7" fill="#3b82f6"/><circle cx="708.1" cy="734.0" r="4.7" fill="#3b82f6"/><circle cx="726.3" cy="726.9" r="4.7" fill="#3b82f6"/><circle cx="744.5" cy="738.0" r="4.7" fill="#3b82f6"/><circle cx="762.7" cy="721.8" r="4.7" fill="#3b82f6"/><circle cx="780.9" cy="731.8" r="4.7" fill="#3b82f6"/><circle cx="799.2" cy="739.2" r="4.7" fill="#3b82f6"/><circle cx="817.4" cy="737.4" r="4.7" fill="#3b82f6"/><circle cx="835.6" cy="725.8" r="4.7" fill="#3b82f6"/><circle cx="853.8" cy="741.2" r="4.7" fill="#3b82f6"/><circle cx="872.0" cy="734.3" r="4.7" fill="#3b82f6"/><circle cx="890.3" cy="728.3" r="4.7" fill="#3b82f6"/><circle cx="908.5" cy="730.7" r="4.7" fill="#3b82f6"/><circle cx="926.7" cy="726.3" r="4.7" fill="#3b82f6"/><circle cx="944.9" cy="720.5" r="4.7" fill="#3b82f6"/><circle cx="963.1" cy="718.7" r="4.7" fill="#3b82f6"/><circle cx="981.4" cy="706.8" r="4.7" fill="#3b82f6"/><circle cx="999.6" cy="708.9" r="4.7" fill="#3b82f6"/><circle cx="1017.8" cy="711.9" r="4.7" fill="#3b82f6"/><circle cx="1036.0" cy="713.9" r="4.7" fill="#3b82f6"/><circle cx="1054.2" cy="709.3" r="4.7" fill="#3b82f6"/><circle cx="1072.5" cy="703.8" r="4.7" fill="#3b82f6"/><circle cx="1090.7" cy="700.5" r="4.7" fill="#3b82f6"/><circle cx="1108.9" cy="700.5" r="4.7" fill="#3b82f6"/><circle cx="1127.1" cy="696.1" r="4.7" fill="#3b82f6"/><circle cx="1145.3" cy="689.5" r="4.7" fill="#3b82f6"/><circle cx="1163.6" cy="675.6" r="4.7" fill="#3b82f6"/><circle cx="1181.8" cy="666.9" r="4.7" fill="#3b82f6"/><circle cx="1200.0" cy="688.9" r="4.7" fill="#3b82f6"/><line x1="1345.0" x2="1999.0" y1="655.8" y2="655.8" stroke="#394454" stroke-width="1.8" stroke-dasharray="6.2 6.6"/><line x1="1345.0" x2="1999.0" y1="715.1" y2="715.1" stroke="#394454" stroke-width="1.8" stroke-dasharray="6.2 6.6"/><line x1="1345.0" x2="1999.0" y1="774.5" y2="774.5" stroke="#394454" stroke-width="1.8" stroke-dasharray="6.2 6.6"/><line x1="1345.0" x2="1999.0" y1="833.8" y2="833.8" stroke="#394454" stroke-width="1.8" stroke-dasharray="6.2 6.6"/><line x1="1345.0" x2="1999.0" y1="893.2" y2="893.2" stroke="#394454" stroke-width="1.8" stroke-dasharray="6.2 6.6"/><line x1="1345.0" x2="1999.0" y1="952.5" y2="952.5" stroke="#394454" stroke-width="1.8" stroke-dasharray="6.2 6.6"/><line x1="1345.0" x2="1999.0" y1="1011.9" y2="1011.9" stroke="#394454" stroke-width="1.8" stroke-dasharray="6.2 6.6"/><polygon points="1354.5,1011.9 1354.5,797.2 1372.8,797.1 1391.0,799.5 1409.3,798.4 1427.6,803.0 1445.8,787.4 1464.1,795.9 1482.4,780.6 1500.6,753.0 1518.9,735.2 1537.2,732.8 1555.4,721.2 1573.7,722.2 1592.0,715.1 1610.2,722.2 1628.5,737.7 1646.8,723.4 1665.0,721.1 1683.3,711.4 1701.6,721.1 1719.8,724.5 1738.1,728.1 1756.4,726.9 1774.6,731.8 1792.9,719.7 1811.2,728.1 1829.4,732.8 1847.7,737.7 1865.9,731.8 1884.2,738.9 1902.5,726.9 1920.7,740.0 1939.0,750.7 1957.3,780.4 1975.5,778.0 1993.8,754.1 1993.8,1011.9" fill="#10b981" fill-opacity="0.10"/><polyline points="1354.5,797.2 1372.8,797.1 1391.0,799.5 1409.3,798.4 1427.6,803.0 1445.8,787.4 1464.1,795.9 1482.4,780.6 1500.6,753.0 1518.9,735.2 1537.2,732.8 1555.4,721.2 1573.7,722.2 1592.0,715.1 1610.2,722.2 1628.5,737.7 1646.8,723.4 1665.0,721.1 1683.3,711.4 1701.6,721.1 1719.8,724.5 1738.1,728.1 1756.4,726.9 1774.6,731.8 1792.9,719.7 1811.2,728.1 1829.4,732.8 1847.7,737.7 1865.9,731.8 1884.2,738.9 1902.5,726.9 1920.7,740.0 1939.0,750.7 1957.3,780.4 1975.5,778.0 1993.8,754.1" fill="none" stroke="#10b981" stroke-width="3.2" stroke-linejoin="round"/><circle cx="1354.5" cy="797.2" r="4.7" fill="#10b981"/><circle cx="1372.8" cy="797.1" r="4.7" fill="#10b981"/><circle cx="1391.0" cy="799.5" r="4.7" fill="#10b981"/><circle cx="1409.3" cy="798.4" r="4.7" fill="#10b981"/><circle cx="1427.6" cy="803.0" r="4.7" fill="#10b981"/><circle cx="1445.8" cy="787.4" r="4.7" fill="#10b981"/><circle cx="1464.1" cy="795.9" r="4.7" fill="#10b981"/><circle cx="1482.4" cy="780.6" r="4.7" fill="#10b981"/><circle cx="1500.6" cy="753.0" r="4.7" fill="#10b981"/><circle cx="1518.9" cy="735.2" r="4.7" fill="#10b981"/><circle cx="1537.2" cy="732.8" r="4.7" fill="#10b981"/><circle cx="1555.4" cy="721.2" r="4.7" fill="#10b981"/><circle cx="1573.7" cy="722.2" r="4.7" fill="#10b981"/><circle cx="1592.0" cy="715.1" r="4.7" fill="#10b981"/><circle cx="1610.2" cy="722.2" r="4.7" fill="#10b981"/><circle cx="1628.5" cy="737.7" r="4.7" fill="#10b981"/><circle cx="1646.8" cy="723.4" r="4.7" fill="#10b981"/><circle cx="1665.0" cy="721.1" r="4.7" fill="#10b981"/><circle cx="1683.3" cy="711.4" r="4.7" fill="#10b981"/><circle cx="1701.6" cy="721.1" r="4.7" fill="#10b981"/><circle cx="1719.8" cy="724.5" r="4.7" fill="#10b981"/><circle cx="1738.1" cy="728.1" r="4.7" fill="#10b981"/><circle cx="1756.4" cy="726.9" r="4.7" fill="#10b981"/><circle cx="1774.6" cy="731.8" r="4.7" fill="#10b981"/><circle cx="1792.9" cy="719.7" r="4.7" fill="#10b981"/><circle cx="1811.2" cy="728.1" r="4.7" fill="#10b981"/><circle cx="1829.4" cy="732.8" r="4.7" fill="#10b981"/><circle cx="1847.7" cy="737.7" r="4.7" fill="#10b981"/><circle cx="1865.9" cy="731.8" r="4.7" fill="#10b981"/><circle cx="1884.2" cy="738.9" r="4.7" fill="#10b981"/><circle cx="1902.5" cy="726.9" r="4.7" fill="#10b981"/><circle cx="1920.7" cy="740.0" r="4.7" fill="#10b981"/><circle cx="1939.0" cy="750.7" r="4.7" fill="#10b981"/><circle cx="1957.3" cy="780.4" r="4.7" fill="#10b981"/><circle cx="1975.5" cy="778.0" r="4.7" fill="#10b981"/><circle cx="1993.8" cy="754.1" r="4.7" fill="#10b981"/><line x1="561.6" x2="1209.0" y1="1234.5" y2="1234.5" stroke="#394454" stroke-width="1.8" stroke-dasharray="6.2 6.6"/><line x1="561.6" x2="1209.0" y1="1319.3" y2="1319.3" stroke="#394454" stroke-width="1.8" stroke-dasharray="6.2 6.6"/><line x1="561.6" x2="1209.0" y1="1404.1" y2="1404.1" stroke="#394454" stroke-width="1.8" stroke-dasharray="6.2 6.6"/><line x1="561.6" x2="1209.0" y1="1488.9" y2="1488.9" stroke="#394454" stroke-width="1.8" stroke-dasharray="6.2 6.6"/><line x1="561.6" x2="1209.0" y1="1573.7" y2="1573.7" stroke="#394454" stroke-width="1.8" stroke-dasharray="6.2 6.6"/><rect x="564.1" y="1545.1" width="11.5" height="28.1" fill="#10b981" fill-opacity="0.85" stroke="#10b981" stroke-width="1.1"/><rect x="564.1" y="1460.7" width="11.5" height="83.4" fill="#3b82f6" fill-opacity="0.85" stroke="#3b82f6" stroke-width="1.1"/><rect x="564.1" y="1250.4" width="11.5" height="209.3" fill="#8b5cf6" fill-opacity="0.85" stroke="#8b5cf6" stroke-width="1.1"/><rect x="564.1" y="1237.1" width="11.5" height="12.3" fill="#ef4444" fill-opacity="0.85" stroke="#ef4444" stroke-width="1.1"/><rect x="564.1" y="1235.0" width="11.5" height="1.1" fill="#6b7280" fill-opacity="0.85" stroke="#6b7280" stroke-width="1.1"/><rect x="582.2" y="1545.7" width="11.5" height="27.5" fill="#10b981" fill-opacity="0.85" stroke="#10b981" stroke-width="1.1"/><rect x="582.2" y="1461.9" width="11.5" height="82.8" fill="#3b82f6" fill-opacity="0.85" stroke="#3b82f6" stroke-width="1.1"/><rect x="582.2" y="1250.4" width="11.5" height="210.5" fill="#8b5cf6" fill-opacity="0.85" stroke="#8b5cf6" stroke-width="1.1"/><rect x="582.2" y="1237.1" width="11.5" height="12.3" fill="#ef4444" fill-opacity="0.85" stroke="#ef4444" stroke-width="1.1"/><rect x="582.2" y="1235.0" width="11.5" height="1.1" fill="#6b7280" fill-opacity="0.85" stroke="#6b7280" stroke-width="1.1"/><rect x="600.2" y="1546.0" width="11.5" height="27.2" fill="#10b981" fill-opacity="0.85" stroke="#10b981" stroke-width="1.1"/><rect x="600.2" y="1461.6" width="11.5" height="83.4" fill="#3b82f6" fill-opacity="0.85" stroke="#3b82f6" stroke-width="1.1"/><rect x="600.2" y="1250.4" width="11.5" height="210.2" fill="#8b5cf6" fill-opacity="0.85" stroke="#8b5cf6" stroke-width="1.1"/><rect x="600.2" y="1237.1" width="11.5" height="12.3" fill="#ef4444" fill-opacity="0.85" stroke="#ef4444" stroke-width="1.1"/><rect x="600.2" y="1235.0" width="11.5" height="1.1" fill="#6b7280" fill-opacity="0.85" stroke="#6b7280" stroke-width="1.1"/><rect x="618.2" y="1544.3" width="11.5" height="28.9" fill="#10b981" fill-opacity="0.85" stroke="#10b981" stroke-width="1.1"/><rect x="618.2" y="1461.6" width="11.5" height="81.7" fill="#3b82f6" fill-opacity="0.85" stroke="#3b82f6" stroke-width="1.1"/><rect x="618.2" y="1250.4" width="11.5" height="210.2" fill="#8b5cf6" fill-opacity="0.85" stroke="#8b5cf6" stroke-width="1.1"/><rect x="618.2" y="1237.1" width="11.5" height="12.3" fill="#ef4444" fill-opacity="0.85" stroke="#ef4444" stroke-width="1.1"/><rect x="618.2" y="1235.0" width="11.5" height="1.1" fill="#6b7280" fill-opacity="0.85" stroke="#6b7280" stroke-width="1.1"/><rect x="636.2" y="1543.4" width="11.5" height="29.8" fill="#10b981" fill-opacity="0.85" stroke="#10b981" stroke-width="1.1"/><rect x="636.2" y="1458.7" width="11.5" height="83.7" fill="#3b82f6" fill-opacity="0.85" stroke="#3b82f6" stroke-width="1.1"/><rect x="636.2" y="1250.4" width="11.5" height="207.3" fill="#8b5cf6" fill-opacity="0.85" stroke="#8b5cf6" stroke-width="1.1"/><rect x="636.2" y="1237.1" width="11.5" height="12.3" fill="#ef4444" fill-opacity="0.85" stroke="#ef4444" stroke-width="1.1"/><rect x="636.2" y="1235.0" width="11.5" height="1.1" fill="#6b7280" fill-opacity="0.85" stroke="#6b7280" stroke-width="1.1"/><rect x="654.2" y="1543.4" width="11.5" height="29.8" fill="#10b981" fill-opacity="0.85" stroke="#10b981" stroke-width="1.1"/><rect x="654.2" y="1458.2" width="11.5" height="84.3" fill="#3b82f6" fill-opacity="0.85" stroke="#3b82f6" stroke-width="1.1"/><rect x="654.2" y="1250.4" width="11.5" height="206.8" fill="#8b5cf6" fill-opacity="0.85" stroke="#8b5cf6" stroke-width="1.1"/><rect x="654.2" y="1237.1" width="11.5" height="12.3" fill="#ef4444" fill-opacity="0.85" stroke="#ef4444" stroke-width="1.1"/><rect x="654.2" y="1235.0" width="11.5" height="1.1" fill="#6b7280" fill-opacity="0.85" stroke="#6b7280" stroke-width="1.1"/><rect x="672.2" y="1542.9" width="11.5" height="30.3" fill="#10b981" fill-opacity="0.85" stroke="#10b981" stroke-width="1.1"/><rect x="672.2" y="1460.2" width="11.5" height="81.7" fill="#3b82f6" fill-opacity="0.85" stroke="#3b82f6" stroke-width="1.1"/><rect x="672.2" y="1250.4" width="11.5" height="208.8" fill="#8b5cf6" fill-opacity="0.85" stroke="#8b5cf6" stroke-width="1.1"/><rect x="672.2" y="1237.1" width="11.5" height="12.3" fill="#ef4444" fill-opacity="0.85" stroke="#ef4444" stroke-width="1.1"/><rect x="672.2" y="1235.0" width="11.5" height="1.1" fill="#6b7280" fill-opacity="0.85" stroke="#6b7280" stroke-width="1.1"/><rect x="690.2" y="1544.3" width="11.5" height="28.9" fill="#10b981" fill-opacity="0.85" stroke="#10b981" stroke-width="1.1"/><rect x="690.2" y="1461.0" width="11.5" height="82.3" fill="#3b82f6" fill-opacity="0.85" stroke="#3b82f6" stroke-width="1.1"/><rect x="690.2" y="1250.4" width="11.5" height="209.6" fill="#8b5cf6" fill-opacity="0.85" stroke="#8b5cf6" stroke-width="1.1"/><rect x="690.2" y="1237.1" width="11.5" height="12.3" fill="#ef4444" fill-opacity="0.85" stroke="#ef4444" stroke-width="1.1"/><rect x="690.2" y="1235.0" width="11.5" height="1.1" fill="#6b7280" fill-opacity="0.85" stroke="#6b7280" stroke-width="1.1"/><rect x="708.2" y="1546.0" width="11.5" height="27.2" fill="#10b981" fill-opacity="0.85" stroke="#10b981" stroke-width="1.1"/><rect x="708.2" y="1459.0" width="11.5" height="86.0" fill="#3b82f6" fill-opacity="0.85" stroke="#3b82f6" stroke-width="1.1"/><rect x="708.2" y="1250.4" width="11.5" height="207.6" fill="#8b5cf6" fill-opacity="0.85" stroke="#8b5cf6" stroke-width="1.1"/><rect x="708.2" y="1237.1" width="11.5" height="12.3" fill="#ef4444" fill-opacity="0.85" stroke="#ef4444" stroke-width="1.1"/><rect x="708.2" y="1235.0" width="11.5" height="1.1" fill="#6b7280" fill-opacity="0.85" stroke="#6b7280" stroke-width="1.1"/><rect x="726.3" y="1546.0" width="11.5" height="27.2" fill="#10b981" fill-opacity="0.85" stroke="#10b981" stroke-width="1.1"/><rect x="726.3" y="1461.0" width="11.5" height="84.0" fill="#3b82f6" fill-opacity="0.85" stroke="#3b82f6" stroke-width="1.1"/><rect x="726.3" y="1250.4" width="11.5" height="209.6" fill="#8b5cf6" fill-opacity="0.85" stroke="#8b5cf6" stroke-width="1.1"/><rect x="726.3" y="1237.1" width="11.5" height="12.3" fill="#ef4444" fill-opacity="0.85" stroke="#ef4444" stroke-width="1.1"/><rect x="726.3" y="1235.0" width="11.5" height="1.1" fill="#6b7280" fill-opacity="0.85" stroke="#6b7280" stroke-width="1.1"/><rect x="744.3" y="1545.1" width="11.5" height="28.1" fill="#10b981" fill-opacity="0.85" stroke="#10b981" stroke-width="1.1"/><rect x="744.3" y="1463.0" width="11.5" height="81.1" fill="#3b82f6" fill-opacity="0.85" stroke="#3b82f6" stroke-width="1.1"/><rect x="744.3" y="1250.4" width="11.5" height="211.6" fill="#8b5cf6" fill-opacity="0.85" stroke="#8b5cf6" stroke-width="1.1"/><rect x="744.3" y="1237.1" width="11.5" height="12.3" fill="#ef4444" fill-opacity="0.85" stroke="#ef4444" stroke-width="1.1"/><rect x="744.3" y="1235.0" width="11.5" height="1.1" fill="#6b7280" fill-opacity="0.85" stroke="#6b7280" stroke-width="1.1"/><rect x="762.3" y="1546.0" width="11.5" height="27.2" fill="#10b981" fill-opacity="0.85" stroke="#10b981" stroke-width="1.1"/><rect x="762.3" y="1461.9" width="11.5" height="83.1" fill="#3b82f6" fill-opacity="0.85" stroke="#3b82f6" stroke-width="1.1"/><rect x="762.3" y="1250.4" width="11.5" height="210.5" fill="#8b5cf6" fill-opacity="0.85" stroke="#8b5cf6" stroke-width="1.1"/><rect x="762.3" y="1237.1" width="11.5" height="12.3" fill="#ef4444" fill-opacity="0.85" stroke="#ef4444" stroke-width="1.1"/><rect x="762.3" y="1235.0" width="11.5" height="1.1" fill="#6b7280" fill-opacity="0.85" stroke="#6b7280" stroke-width="1.1"/><rect x="780.3" y="1545.7" width="11.5" height="27.5" fill="#10b981" fill-opacity="0.85" stroke="#10b981" stroke-width="1.1"/><rect x="780.3" y="1464.2" width="11.5" height="80.6" fill="#3b82f6" fill-opacity="0.85" stroke="#3b82f6" stroke-width="1.1"/><rect x="780.3" y="1250.4" width="11.5" height="212.8" fill="#8b5cf6" fill-opacity="0.85" stroke="#8b5cf6" stroke-width="1.1"/><rect x="780.3" y="1237.1" width="11.5" height="12.3" fill="#ef4444" fill-opacity="0.85" stroke="#ef4444" stroke-width="1.1"/><rect x="780.3" y="1235.0" width="11.5" height="1.1" fill="#6b7280" fill-opacity="0.85" stroke="#6b7280" stroke-width="1.1"/><rect x="798.3" y="1545.4" width="11.5" height="27.8" fill="#10b981" fill-opacity="0.85" stroke="#10b981" stroke-width="1.1"/><rect x="798.3" y="1459.9" width="11.5" height="84.5" fill="#3b82f6" fill-opacity="0.85" stroke="#3b82f6" stroke-width="1.1"/><rect x="798.3" y="1250.4" width="11.5" height="208.5" fill="#8b5cf6" fill-opacity="0.85" stroke="#8b5cf6" stroke-width="1.1"/><rect x="798.3" y="1237.1" width="11.5" height="12.3" fill="#ef4444" fill-opacity="0.85" stroke="#ef4444" stroke-width="1.1"/><rect x="798.3" y="1235.0" width="11.5" height="1.1" fill="#6b7280" fill-opacity="0.85" stroke="#6b7280" stroke-width="1.1"/><rect x="816.3" y="1546.0" width="11.5" height="27.2" fill="#10b981" fill-opacity="0.85" stroke="#10b981" stroke-width="1.1"/><rect x="816.3" y="1459.6" width="11.5" height="85.4" fill="#3b82f6" fill-opacity="0.85" stroke="#3b82f6" stroke-width="1.1"/><rect x="816.3" y="1250.4" width="11.5" height="208.2" fill="#8b5cf6" fill-opacity="0.85" stroke="#8b5cf6" stroke-width="1.1"/><rect x="816.3" y="1237.1" width="11.5" height="12.3" fill="#ef4444" fill-opacity="0.85" stroke="#ef4444" stroke-width="1.1"/><rect x="816.3" y="1235.0" width="11.5" height="1.1" fill="#6b7280" fill-opacity="0.85" stroke="#6b7280" stroke-width="1.1"/><rect x="834.3" y="1545.4" width="11.5" height="27.8" fill="#10b981" fill-opacity="0.85" stroke="#10b981" stroke-width="1.1"/><rect x="834.3" y="1467.0" width="11.5" height="77.4" fill="#3b82f6" fill-opacity="0.85" stroke="#3b82f6" stroke-width="1.1"/><rect x="834.3" y="1250.4" width="11.5" height="215.6" fill="#8b5cf6" fill-opacity="0.85" stroke="#8b5cf6" stroke-width="1.1"/><rect x="834.3" y="1237.1" width="11.5" height="12.3" fill="#ef4444" fill-opacity="0.85" stroke="#ef4444" stroke-width="1.1"/><rect x="834.3" y="1235.0" width="11.5" height="1.1" fill="#6b7280" fill-opacity="0.85" stroke="#6b7280" stroke-width="1.1"/><rect x="852.3" y="1544.0" width="11.5" height="29.2" fill="#10b981" fill-opacity="0.85" stroke="#10b981" stroke-width="1.1"/><rect x="852.3" y="1464.2" width="11.5" height="78.8" fill="#3b82f6" fill-opacity="0.85" stroke="#3b82f6" stroke-width="1.1"/><rect x="852.3" y="1250.4" width="11.5" height="212.8" fill="#8b5cf6" fill-opacity="0.85" stroke="#8b5cf6" stroke-width="1.1"/><rect x="852.3" y="1237.1" width="11.5" height="12.3" fill="#ef4444" fill-opacity="0.85" stroke="#ef4444" stroke-width="1.1"/><rect x="852.3" y="1235.0" width="11.5" height="1.1" fill="#6b7280" fill-opacity="0.85" stroke="#6b7280" stroke-width="1.1"/><rect x="870.4" y="1544.0" width="11.5" height="29.2" fill="#10b981" fill-opacity="0.85" stroke="#10b981" stroke-width="1.1"/><rect x="870.4" y="1465.0" width="11.5" height="78.0" fill="#3b82f6" fill-opacity="0.85" stroke="#3b82f6" stroke-width="1.1"/><rect x="870.4" y="1250.4" width="11.5" height="213.6" fill="#8b5cf6" fill-opacity="0.85" stroke="#8b5cf6" stroke-width="1.1"/><rect x="870.4" y="1237.1" width="11.5" height="12.3" fill="#ef4444" fill-opacity="0.85" stroke="#ef4444" stroke-width="1.1"/><rect x="870.4" y="1235.0" width="11.5" height="1.1" fill="#6b7280" fill-opacity="0.85" stroke="#6b7280" stroke-width="1.1"/><rect x="888.4" y="1545.1" width="11.5" height="28.1" fill="#10b981" fill-opacity="0.85" stroke="#10b981" stroke-width="1.1"/><rect x="888.4" y="1467.0" width="11.5" height="77.1" fill="#3b82f6" fill-opacity="0.85" stroke="#3b82f6" stroke-width="1.1"/><rect x="888.4" y="1250.4" width="11.5" height="215.6" fill="#8b5cf6" fill-opacity="0.85" stroke="#8b5cf6" stroke-width="1.1"/><rect x="888.4" y="1237.1" width="11.5" height="12.3" fill="#ef4444" fill-opacity="0.85" stroke="#ef4444" stroke-width="1.1"/><rect x="888.4" y="1235.0" width="11.5" height="1.1" fill="#6b7280" fill-opacity="0.85" stroke="#6b7280" stroke-width="1.1"/><rect x="906.4" y="1545.1" width="11.5" height="28.1" fill="#10b981" fill-opacity="0.85" stroke="#10b981" stroke-width="1.1"/><rect x="906.4" y="1465.6" width="11.5" height="78.6" fill="#3b82f6" fill-opacity="0.85" stroke="#3b82f6" stroke-width="1.1"/><rect x="906.4" y="1250.4" width="11.5" height="214.2" fill="#8b5cf6" fill-opacity="0.85" stroke="#8b5cf6" stroke-width="1.1"/><rect x="906.4" y="1237.1" width="11.5" height="12.3" fill="#ef4444" fill-opacity="0.85" stroke="#ef4444" stroke-width="1.1"/><rect x="906.4" y="1235.0" width="11.5" height="1.1" fill="#6b7280" fill-opacity="0.85" stroke="#6b7280" stroke-width="1.1"/><rect x="924.4" y="1545.1" width="11.5" height="28.1" fill="#10b981" fill-opacity="0.85" stroke="#10b981" stroke-width="1.1"/><rect x="924.4" y="1465.6" width="11.5" height="78.6" fill="#3b82f6" fill-opacity="0.85" stroke="#3b82f6" stroke-width="1.1"/><rect x="924.4" y="1250.4" width="11.5" height="214.2" fill="#8b5cf6" fill-opacity="0.85" stroke="#8b5cf6" stroke-width="1.1"/><rect x="924.4" y="1237.1" width="11.5" height="12.3" fill="#ef4444" fill-opacity="0.85" stroke="#ef4444" stroke-width="1.1"/><rect x="924.4" y="1235.0" width="11.5" height="1.1" fill="#6b7280" fill-opacity="0.85" stroke="#6b7280" stroke-width="1.1"/><rect x="942.4" y="1544.3" width="11.5" height="28.9" fill="#10b981" fill-opacity="0.85" stroke="#10b981" stroke-width="1.1"/><rect x="942.4" y="1464.2" width="11.5" height="79.1" fill="#3b82f6" fill-opacity="0.85" stroke="#3b82f6" stroke-width="1.1"/><rect x="942.4" y="1250.4" width="11.5" height="212.8" fill="#8b5cf6" fill-opacity="0.85" stroke="#8b5cf6" stroke-width="1.1"/><rect x="942.4" y="1237.1" width="11.5" height="12.3" fill="#ef4444" fill-opacity="0.85" stroke="#ef4444" stroke-width="1.1"/><rect x="942.4" y="1235.0" width="11.5" height="1.1" fill="#6b7280" fill-opacity="0.85" stroke="#6b7280" stroke-width="1.1"/><rect x="960.4" y="1546.9" width="11.5" height="26.3" fill="#10b981" fill-opacity="0.85" stroke="#10b981" stroke-width="1.1"/><rect x="960.4" y="1458.2" width="11.5" height="87.7" fill="#3b82f6" fill-opacity="0.85" stroke="#3b82f6" stroke-width="1.1"/><rect x="960.4" y="1255.1" width="11.5" height="202.1" fill="#8b5cf6" fill-opacity="0.85" stroke="#8b5cf6" stroke-width="1.1"/><rect x="960.4" y="1235.9" width="11.5" height="18.2" fill="#ef4444" fill-opacity="0.85" stroke="#ef4444" stroke-width="1.1"/><rect x="960.4" y="1235.0" width="11.5" height="0.4" fill="#6b7280" fill-opacity="0.85" stroke="#6b7280" stroke-width="1.1"/><rect x="978.4" y="1548.0" width="11.5" height="25.2" fill="#10b981" fill-opacity="0.85" stroke="#10b981" stroke-width="1.1"/><rect x="978.4" y="1465.0" width="11.5" height="82.0" fill="#3b82f6" fill-opacity="0.85" stroke="#3b82f6" stroke-width="1.1"/><rect x="978.4" y="1254.4" width="11.5" height="209.6" fill="#8b5cf6" fill-opacity="0.85" stroke="#8b5cf6" stroke-width="1.1"/><rect x="978.4" y="1235.9" width="11.5" height="17.5" fill="#ef4444" fill-opacity="0.85" stroke="#ef4444" stroke-width="1.1"/><rect x="978.4" y="1235.0" width="11.5" height="0.4" fill="#6b7280" fill-opacity="0.85" stroke="#6b7280" stroke-width="1.1"/><rect x="996.4" y="1548.9" width="11.5" height="24.3" fill="#10b981" fill-opacity="0.85" stroke="#10b981" stroke-width="1.1"/><rect x="996.4" y="1466.2" width="11.5" height="81.7" fill="#3b82f6" fill-opacity="0.85" stroke="#3b82f6" stroke-width="1.1"/><rect x="996.4" y="1254.4" width="11.5" height="210.8" fill="#8b5cf6" fill-opacity="0.85" stroke="#8b5cf6" stroke-width="1.1"/><rect x="996.4" y="1235.9" width="11.5" height="17.5" fill="#ef4444" fill-opacity="0.85" stroke="#ef4444" stroke-width="1.1"/><rect x="996.4" y="1235.0" width="11.5" height="0.4" fill="#6b7280" fill-opacity="0.85" stroke="#6b7280" stroke-width="1.1"/><rect x="1014.5" y="1548.0" width="11.5" height="25.2" fill="#10b981" fill-opacity="0.85" stroke="#10b981" stroke-width="1.1"/><rect x="1014.5" y="1463.9" width="11.5" height="83.1" fill="#3b82f6" fill-opacity="0.85" stroke="#3b82f6" stroke-width="1.1"/><rect x="1014.5" y="1254.4" width="11.5" height="208.5" fill="#8b5cf6" fill-opacity="0.85" stroke="#8b5cf6" stroke-width="1.1"/><rect x="1014.5" y="1235.9" width="11.5" height="17.5" fill="#ef4444" fill-opacity="0.85" stroke="#ef4444" stroke-width="1.1"/><rect x="1014.5" y="1235.0" width="11.5" height="0.4" fill="#6b7280" fill-opacity="0.85" stroke="#6b7280" stroke-width="1.1"/><rect x="1032.5" y="1548.0" width="11.5" height="25.2" fill="#10b981" fill-opacity="0.85" stroke="#10b981" stroke-width="1.1"/><rect x="1032.5" y="1462.5" width="11.5" height="84.5" fill="#3b82f6" fill-opacity="0.85" stroke="#3b82f6" stroke-width="1.1"/><rect x="1032.5" y="1254.4" width="11.5" height="207.1" fill="#8b5cf6" fill-opacity="0.85" stroke="#8b5cf6" stroke-width="1.1"/><rect x="1032.5" y="1235.9" width="11.5" height="17.5" fill="#ef4444" fill-opacity="0.85" stroke="#ef4444" stroke-width="1.1"/><rect x="1032.5" y="1235.0" width="11.5" height="0.4" fill="#6b7280" fill-opacity="0.85" stroke="#6b7280" stroke-width="1.1"/><rect x="1050.5" y="1547.4" width="11.5" height="25.8" fill="#10b981" fill-opacity="0.85" stroke="#10b981" stroke-width="1.1"/><rect x="1050.5" y="1462.5" width="11.5" height="84.0" fill="#3b82f6" fill-opacity="0.85" stroke="#3b82f6" stroke-width="1.1"/><rect x="1050.5" y="1254.4" width="11.5" height="207.1" fill="#8b5cf6" fill-opacity="0.85" stroke="#8b5cf6" stroke-width="1.1"/><rect x="1050.5" y="1235.9" width="11.5" height="17.5" fill="#ef4444" fill-opacity="0.85" stroke="#ef4444" stroke-width="1.1"/><rect x="1050.5" y="1235.0" width="11.5" height="0.4" fill="#6b7280" fill-opacity="0.85" stroke="#6b7280" stroke-width="1.1"/><rect x="1068.5" y="1547.7" width="11.5" height="25.5" fill="#10b981" fill-opacity="0.85" stroke="#10b981" stroke-width="1.1"/><rect x="1068.5" y="1462.7" width="11.5" height="84.0" fill="#3b82f6" fill-opacity="0.85" stroke="#3b82f6" stroke-width="1.1"/><rect x="1068.5" y="1254.4" width="11.5" height="207.3" fill="#8b5cf6" fill-opacity="0.85" stroke="#8b5cf6" stroke-width="1.1"/><rect x="1068.5" y="1235.9" width="11.5" height="17.5" fill="#ef4444" fill-opacity="0.85" stroke="#ef4444" stroke-width="1.1"/><rect x="1068.5" y="1235.0" width="11.5" height="0.4" fill="#6b7280" fill-opacity="0.85" stroke="#6b7280" stroke-width="1.1"/><rect x="1086.5" y="1547.1" width="11.5" height="26.1" fill="#10b981" fill-opacity="0.85" stroke="#10b981" stroke-width="1.1"/><rect x="1086.5" y="1462.2" width="11.5" height="84.0" fill="#3b82f6" fill-opacity="0.85" stroke="#3b82f6" stroke-width="1.1"/><rect x="1086.5" y="1254.4" width="11.5" height="206.8" fill="#8b5cf6" fill-opacity="0.85" stroke="#8b5cf6" stroke-width="1.1"/><rect x="1086.5" y="1235.9" width="11.5" height="17.5" fill="#ef4444" fill-opacity="0.85" stroke="#ef4444" stroke-width="1.1"/><rect x="1086.5" y="1235.0" width="11.5" height="0.4" fill="#6b7280" fill-opacity="0.85" stroke="#6b7280" stroke-width="1.1"/><rect x="1104.5" y="1547.7" width="11.5" height="25.5" fill="#10b981" fill-opacity="0.85" stroke="#10b981" stroke-width="1.1"/><rect x="1104.5" y="1463.3" width="11.5" height="83.4" fill="#3b82f6" fill-opacity="0.85" stroke="#3b82f6" stroke-width="1.1"/><rect x="1104.5" y="1254.4" width="11.5" height="207.9" fill="#8b5cf6" fill-opacity="0.85" stroke="#8b5cf6" stroke-width="1.1"/><rect x="1104.5" y="1235.9" width="11.5" height="17.5" fill="#ef4444" fill-opacity="0.85" stroke="#ef4444" stroke-width="1.1"/><rect x="1104.5" y="1235.0" width="11.5" height="0.4" fill="#6b7280" fill-opacity="0.85" stroke="#6b7280" stroke-width="1.1"/><rect x="1122.5" y="1547.7" width="11.5" height="25.5" fill="#10b981" fill-opacity="0.85" stroke="#10b981" stroke-width="1.1"/><rect x="1122.5" y="1463.0" width="11.5" height="83.7" fill="#3b82f6" fill-opacity="0.85" stroke="#3b82f6" stroke-width="1.1"/><rect x="1122.5" y="1254.4" width="11.5" height="207.6" fill="#8b5cf6" fill-opacity="0.85" stroke="#8b5cf6" stroke-width="1.1"/><rect x="1122.5" y="1235.9" width="11.5" height="17.5" fill="#ef4444" fill-opacity="0.85" stroke="#ef4444" stroke-width="1.1"/><rect x="1122.5" y="1235.0" width="11.5" height="0.4" fill="#6b7280" fill-opacity="0.85" stroke="#6b7280" stroke-width="1.1"/><rect x="1140.5" y="1547.7" width="11.5" height="25.5" fill="#10b981" fill-opacity="0.85" stroke="#10b981" stroke-width="1.1"/><rect x="1140.5" y="1465.0" width="11.5" height="81.7" fill="#3b82f6" fill-opacity="0.85" stroke="#3b82f6" stroke-width="1.1"/><rect x="1140.5" y="1254.4" width="11.5" height="209.6" fill="#8b5cf6" fill-opacity="0.85" stroke="#8b5cf6" stroke-width="1.1"/><rect x="1140.5" y="1235.9" width="11.5" height="17.5" fill="#ef4444" fill-opacity="0.85" stroke="#ef4444" stroke-width="1.1"/><rect x="1140.5" y="1235.0" width="11.5" height="0.4" fill="#6b7280" fill-opacity="0.85" stroke="#6b7280" stroke-width="1.1"/><rect x="1158.5" y="1546.3" width="11.5" height="26.9" fill="#10b981" fill-opacity="0.85" stroke="#10b981" stroke-width="1.1"/><rect x="1158.5" y="1465.6" width="11.5" height="79.7" fill="#3b82f6" fill-opacity="0.85" stroke="#3b82f6" stroke-width="1.1"/><rect x="1158.5" y="1252.5" width="11.5" height="212.1" fill="#8b5cf6" fill-opacity="0.85" stroke="#8b5cf6" stroke-width="1.1"/><rect x="1158.5" y="1236.1" width="11.5" height="15.4" fill="#ef4444" fill-opacity="0.85" stroke="#ef4444" stroke-width="1.1"/><rect x="1158.5" y="1235.0" width="11.5" height="0.4" fill="#6b7280" fill-opacity="0.85" stroke="#6b7280" stroke-width="1.1"/><rect x="1176.6" y="1546.6" width="11.5" height="26.6" fill="#10b981" fill-opacity="0.85" stroke="#10b981" stroke-width="1.1"/><rect x="1176.6" y="1465.9" width="11.5" height="79.7" fill="#3b82f6" fill-opacity="0.85" stroke="#3b82f6" stroke-width="1.1"/><rect x="1176.6" y="1252.5" width="11.5" height="212.4" fill="#8b5cf6" fill-opacity="0.85" stroke="#8b5cf6" stroke-width="1.1"/><rect x="1176.6" y="1236.1" width="11.5" height="15.4" fill="#ef4444" fill-opacity="0.85" stroke="#ef4444" stroke-width="1.1"/><rect x="1176.6" y="1235.0" width="11.5" height="0.4" fill="#6b7280" fill-opacity="0.85" stroke="#6b7280" stroke-width="1.1"/><rect x="1194.6" y="1546.9" width="11.5" height="26.3" fill="#10b981" fill-opacity="0.85" stroke="#10b981" stroke-width="1.1"/><rect x="1194.6" y="1463.0" width="11.5" height="82.8" fill="#3b82f6" fill-opacity="0.85" stroke="#3b82f6" stroke-width="1.1"/><rect x="1194.6" y="1254.4" width="11.5" height="207.6" fill="#8b5cf6" fill-opacity="0.85" stroke="#8b5cf6" stroke-width="1.1"/><rect x="1194.6" y="1235.9" width="11.5" height="17.5" fill="#ef4444" fill-opacity="0.85" stroke="#ef4444" stroke-width="1.1"/><rect x="1194.6" y="1235.0" width="11.5" height="0.4" fill="#6b7280" fill-opacity="0.85" stroke="#6b7280" stroke-width="1.1"/><circle cx="671.7" cy="1644" r="8" fill="#10b981"/><circle cx="767.8" cy="1644" r="8" fill="#3b82f6"/><circle cx="844.0" cy="1644" r="8" fill="#8b5cf6"/><circle cx="922.0" cy="1644" r="8" fill="#ef4444"/><circle cx="1015.9" cy="1644" r="8" fill="#6b7280"/><line x1="1345.0" x2="1995.0" y1="1217.9" y2="1217.9" stroke="#394454" stroke-width="1.8" stroke-dasharray="6.2 6.6"/><line x1="1345.0" x2="1995.0" y1="1306.9" y2="1306.9" stroke="#394454" stroke-width="1.8" stroke-dasharray="6.2 6.6"/><line x1="1345.0" x2="1995.0" y1="1395.8" y2="1395.8" stroke="#394454" stroke-width="1.8" stroke-dasharray="6.2 6.6"/><line x1="1345.0" x2="1995.0" y1="1484.8" y2="1484.8" stroke="#394454" stroke-width="1.8" stroke-dasharray="6.2 6.6"/><line x1="1345.0" x2="1995.0" y1="1573.8" y2="1573.8" stroke="#394454" stroke-width="1.8" stroke-dasharray="6.2 6.6"/><path d="M1348.9,1573.8 V1440.3 Q1348.9,1437.1 1352.1,1437.1 H1356.5 Q1359.7,1437.1 1359.7,1440.3 V1573.8 Z" fill="#3b82f6" fill-opacity="0.86"/><path d="M1366.9,1573.8 V1389.2 Q1366.9,1386.0 1370.1,1386.0 H1374.5 Q1377.7,1386.0 1377.7,1389.2 V1573.8 Z" fill="#3b82f6" fill-opacity="0.86"/><path d="M1385.0,1573.8 V1339.4 Q1385.0,1336.2 1388.2,1336.2 H1392.6 Q1395.8,1336.2 1395.8,1339.4 V1573.8 Z" fill="#3b82f6" fill-opacity="0.86"/><path d="M1403.0,1573.8 V1298.0 Q1403.0,1294.8 1406.2,1294.8 H1410.6 Q1413.8,1294.8 1413.8,1298.0 V1573.8 Z" fill="#3b82f6" fill-opacity="0.86"/><path d="M1421.1,1573.8 V1325.3 Q1421.1,1322.1 1424.3,1322.1 H1428.7 Q1431.9,1322.1 1431.9,1325.3 V1573.8 Z" fill="#3b82f6" fill-opacity="0.86"/><path d="M1439.1,1573.8 V1342.5 Q1439.1,1339.3 1442.3,1339.3 H1446.7 Q1449.9,1339.3 1449.9,1342.5 V1573.8 Z" fill="#3b82f6" fill-opacity="0.86"/><path d="M1457.2,1573.8 V1358.2 Q1457.2,1355.0 1460.4,1355.0 H1464.8 Q1468.0,1355.0 1468.0,1358.2 V1573.8 Z" fill="#3b82f6" fill-opacity="0.86"/><path d="M1475.2,1573.8 V1347.5 Q1475.2,1344.3 1478.4,1344.3 H1482.8 Q1486.0,1344.3 1486.0,1347.5 V1573.8 Z" fill="#3b82f6" fill-opacity="0.86"/><path d="M1493.3,1573.8 V1340.1 Q1493.3,1336.9 1496.5,1336.9 H1500.9 Q1504.1,1336.9 1504.1,1340.1 V1573.8 Z" fill="#3b82f6" fill-opacity="0.86"/><path d="M1511.3,1573.8 V1321.3 Q1511.3,1318.1 1514.5,1318.1 H1518.9 Q1522.1,1318.1 1522.1,1321.3 V1573.8 Z" fill="#3b82f6" fill-opacity="0.86"/><path d="M1529.4,1573.8 V1355.8 Q1529.4,1352.6 1532.6,1352.6 H1537.0 Q1540.2,1352.6 1540.2,1355.8 V1573.8 Z" fill="#3b82f6" fill-opacity="0.86"/><path d="M1547.4,1573.8 V1359.4 Q1547.4,1356.2 1550.6,1356.2 H1555.0 Q1558.2,1356.2 1558.2,1359.4 V1573.8 Z" fill="#3b82f6" fill-opacity="0.86"/><path d="M1565.5,1573.8 V1371.8 Q1565.5,1368.6 1568.7,1368.6 H1573.1 Q1576.3,1368.6 1576.3,1371.8 V1573.8 Z" fill="#3b82f6" fill-opacity="0.86"/><path d="M1583.5,1573.8 V1366.1 Q1583.5,1362.9 1586.7,1362.9 H1591.1 Q1594.3,1362.9 1594.3,1366.1 V1573.8 Z" fill="#3b82f6" fill-opacity="0.86"/><path d="M1601.6,1573.8 V1331.3 Q1601.6,1328.1 1604.8,1328.1 H1609.2 Q1612.4,1328.1 1612.4,1331.3 V1573.8 Z" fill="#3b82f6" fill-opacity="0.86"/><path d="M1619.6,1573.8 V1323.4 Q1619.6,1320.2 1622.8,1320.2 H1627.2 Q1630.4,1320.2 1630.4,1323.4 V1573.8 Z" fill="#3b82f6" fill-opacity="0.86"/><path d="M1637.7,1573.8 V1363.4 Q1637.7,1360.2 1640.9,1360.2 H1645.3 Q1648.5,1360.2 1648.5,1363.4 V1573.8 Z" fill="#3b82f6" fill-opacity="0.86"/><path d="M1655.7,1573.8 V1327.2 Q1655.7,1324.0 1658.9,1324.0 H1663.3 Q1666.5,1324.0 1666.5,1327.2 V1573.8 Z" fill="#3b82f6" fill-opacity="0.86"/><path d="M1673.7,1573.8 V1344.8 Q1673.7,1341.6 1676.9,1341.6 H1681.3 Q1684.5,1341.6 1684.5,1344.8 V1573.8 Z" fill="#3b82f6" fill-opacity="0.86"/><path d="M1691.8,1573.8 V1343.2 Q1691.8,1340.0 1695.0,1340.0 H1699.4 Q1702.6,1340.0 1702.6,1343.2 V1573.8 Z" fill="#3b82f6" fill-opacity="0.86"/><path d="M1709.8,1573.8 V1336.1 Q1709.8,1332.9 1713.0,1332.9 H1717.4 Q1720.6,1332.9 1720.6,1336.1 V1573.8 Z" fill="#3b82f6" fill-opacity="0.86"/><path d="M1727.9,1573.8 V1317.0 Q1727.9,1313.8 1731.1,1313.8 H1735.5 Q1738.7,1313.8 1738.7,1317.0 V1573.8 Z" fill="#3b82f6" fill-opacity="0.86"/><path d="M1745.9,1573.8 V1373.9 Q1745.9,1370.7 1749.1,1370.7 H1753.5 Q1756.7,1370.7 1756.7,1373.9 V1573.8 Z" fill="#3b82f6" fill-opacity="0.86"/><path d="M1764.0,1573.8 V1352.0 Q1764.0,1348.8 1767.2,1348.8 H1771.6 Q1774.8,1348.8 1774.8,1352.0 V1573.8 Z" fill="#3b82f6" fill-opacity="0.86"/><path d="M1782.0,1573.8 V1362.0 Q1782.0,1358.8 1785.2,1358.8 H1789.6 Q1792.8,1358.8 1792.8,1362.0 V1573.8 Z" fill="#3b82f6" fill-opacity="0.86"/><path d="M1800.1,1573.8 V1356.3 Q1800.1,1353.1 1803.3,1353.1 H1807.7 Q1810.9,1353.1 1810.9,1356.3 V1573.8 Z" fill="#3b82f6" fill-opacity="0.86"/><path d="M1818.1,1573.8 V1316.3 Q1818.1,1313.1 1821.3,1313.1 H1825.7 Q1828.9,1313.1 1828.9,1316.3 V1573.8 Z" fill="#3b82f6" fill-opacity="0.86"/><path d="M1836.2,1573.8 V1268.2 Q1836.2,1265.0 1839.4,1265.0 H1843.8 Q1847.0,1265.0 1847.0,1268.2 V1573.8 Z" fill="#3b82f6" fill-opacity="0.86"/><path d="M1854.2,1573.8 V1296.5 Q1854.2,1293.3 1857.4,1293.3 H1861.8 Q1865.0,1293.3 1865.0,1296.5 V1573.8 Z" fill="#3b82f6" fill-opacity="0.86"/><path d="M1872.3,1573.8 V1314.4 Q1872.3,1311.2 1875.5,1311.2 H1879.9 Q1883.1,1311.2 1883.1,1314.4 V1573.8 Z" fill="#3b82f6" fill-opacity="0.86"/><path d="M1890.3,1573.8 V1330.6 Q1890.3,1327.4 1893.5,1327.4 H1897.9 Q1901.1,1327.4 1901.1,1330.6 V1573.8 Z" fill="#3b82f6" fill-opacity="0.86"/><path d="M1908.4,1573.8 V1326.1 Q1908.4,1322.9 1911.6,1322.9 H1916.0 Q1919.2,1322.9 1919.2,1326.1 V1573.8 Z" fill="#3b82f6" fill-opacity="0.86"/><path d="M1926.4,1573.8 V1318.2 Q1926.4,1315.0 1929.6,1315.0 H1934.0 Q1937.2,1315.0 1937.2,1318.2 V1573.8 Z" fill="#3b82f6" fill-opacity="0.86"/><path d="M1944.5,1573.8 V1298.4 Q1944.5,1295.2 1947.7,1295.2 H1952.1 Q1955.3,1295.2 1955.3,1298.4 V1573.8 Z" fill="#3b82f6" fill-opacity="0.86"/><path d="M1962.5,1573.8 V1325.8 Q1962.5,1322.6 1965.7,1322.6 H1970.1 Q1973.3,1322.6 1973.3,1325.8 V1573.8 Z" fill="#3b82f6" fill-opacity="0.86"/><path d="M1980.5,1573.8 V1343.4 Q1980.5,1340.2 1983.7,1340.2 H1988.1 Q1991.3,1340.2 1991.3,1343.4 V1573.8 Z" fill="#3b82f6" fill-opacity="0.86"/><polyline points="1354.3,1533.6 1372.3,1440.7 1390.4,1349.0 1408.4,1276.4 1426.5,1329.0 1444.5,1357.9 1462.6,1383.1 1480.6,1369.0 1498.7,1363.3 1516.7,1333.6 1534.8,1389.0 1552.8,1403.6 1570.9,1421.4 1588.9,1407.4 1607.0,1345.7 1625.0,1338.3 1643.1,1384.3 1661.1,1341.0 1679.1,1375.0 1697.2,1370.7 1715.2,1360.2 1733.3,1330.0 1751.3,1431.2 1769.4,1398.3 1787.4,1415.5 1805.5,1404.3 1823.5,1333.8 1841.6,1260.2 1859.6,1304.5 1877.7,1337.6 1895.7,1365.5 1913.8,1360.0 1931.8,1349.8 1949.9,1324.8 1967.9,1374.8 1985.9,1392.9" fill="none" stroke="#f59e0b" stroke-width="3.4" stroke-linejoin="round"/><circle cx="1354.3" cy="1533.6" r="4.6" fill="#f59e0b"/><circle cx="1372.3" cy="1440.7" r="4.6" fill="#f59e0b"/><circle cx="1390.4" cy="1349.0" r="4.6" fill="#f59e0b"/><circle cx="1408.4" cy="1276.4" r="4.6" fill="#f59e0b"/><circle cx="1426.5" cy="1329.0" r="4.6" fill="#f59e0b"/><circle cx="1444.5" cy="1357.9" r="4.6" fill="#f59e0b"/><circle cx="1462.6" cy="1383.1" r="4.6" fill="#f59e0b"/><circle cx="1480.6" cy="1369.0" r="4.6" fill="#f59e0b"/><circle cx="1498.7" cy="1363.3" r="4.6" fill="#f59e0b"/><circle cx="1516.7" cy="1333.6" r="4.6" fill="#f59e0b"/><circle cx="1534.8" cy="1389.0" r="4.6" fill="#f59e0b"/><circle cx="1552.8" cy="1403.6" r="4.6" fill="#f59e0b"/><circle cx="1570.9" cy="1421.4" r="4.6" fill="#f59e0b"/><circle cx="1588.9" cy="1407.4" r="4.6" fill="#f59e0b"/><circle cx="1607.0" cy="1345.7" r="4.6" fill="#f59e0b"/><circle cx="1625.0" cy="1338.3" r="4.6" fill="#f59e0b"/><circle cx="1643.1" cy="1384.3" r="4.6" fill="#f59e0b"/><circle cx="1661.1" cy="1341.0" r="4.6" fill="#f59e0b"/><circle cx="1679.1" cy="1375.0" r="4.6" fill="#f59e0b"/><circle cx="1697.2" cy="1370.7" r="4.6" fill="#f59e0b"/><circle cx="1715.2" cy="1360.2" r="4.6" fill="#f59e0b"/><circle cx="1733.3" cy="1330.0" r="4.6" fill="#f59e0b"/><circle cx="1751.3" cy="1431.2" r="4.6" fill="#f59e0b"/><circle cx="1769.4" cy="1398.3" r="4.6" fill="#f59e0b"/><circle cx="1787.4" cy="1415.5" r="4.6" fill="#f59e0b"/><circle cx="1805.5" cy="1404.3" r="4.6" fill="#f59e0b"/><circle cx="1823.5" cy="1333.8" r="4.6" fill="#f59e0b"/><circle cx="1841.6" cy="1260.2" r="4.6" fill="#f59e0b"/><circle cx="1859.6" cy="1304.5" r="4.6" fill="#f59e0b"/><circle cx="1877.7" cy="1337.6" r="4.6" fill="#f59e0b"/><circle cx="1895.7" cy="1365.5" r="4.6" fill="#f59e0b"/><circle cx="1913.8" cy="1360.0" r="4.6" fill="#f59e0b"/><circle cx="1931.8" cy="1349.8" r="4.6" fill="#f59e0b"/><circle cx="1949.9" cy="1324.8" r="4.6" fill="#f59e0b"/><circle cx="1967.9" cy="1374.8" r="4.6" fill="#f59e0b"/><circle cx="1985.9" cy="1392.9" r="4.6" fill="#f59e0b"/><circle cx="1539.8" cy="1668.4" r="8" fill="#3b82f6"/><line x1="1654" x2="1678" y1="1668.4" y2="1668.4" stroke="#f59e0b" stroke-width="2.6"/></svg>
<span class="t" style="top:299.5px;font-size:16px;line-height:21px;color:#f4f4f5;font-weight:700;letter-spacing:0.66px;left:2081.0px;">NEEDS ATTENTION</span>
<span class="t" style="top:343.2px;font-size:20.6px;line-height:27px;color:#c2c2ca;font-weight:700;left:2081.0px;">Revenue Variance (MoM)</span>
<span class="t" style="top:344.2px;font-size:18.7px;line-height:24px;color:#8a8a95;right:47.0px;">7 Assets</span>
<span class="t" style="top:381.0px;font-size:20.9px;line-height:27px;color:#f4f4f5;left:2093.0px;">Kyobashi Station Complex</span>
<span class="t" style="top:379.5px;font-size:18px;line-height:23px;color:#10ca91;font-family:'DejaVu Sans Mono','Liberation Mono',monospace;right:57.6px;">+30.8%</span>
<span class="t" style="top:419.0px;font-size:20.9px;line-height:27px;color:#f4f4f5;left:2093.0px;">Shinjuku North Plaza</span>
<span class="t" style="top:417.5px;font-size:18px;line-height:23px;color:#f86c6d;font-family:'DejaVu Sans Mono','Liberation Mono',monospace;right:57.6px;">−24.4%</span>
<span class="t" style="top:457.0px;font-size:20.9px;line-height:27px;color:#f4f4f5;left:2093.0px;">Minami-Aoyama Court</span>
<span class="t" style="top:455.5px;font-size:18px;line-height:23px;color:#10ca91;font-family:'DejaVu Sans Mono','Liberation Mono',monospace;right:57.6px;">+16.1%</span>
<span class="t" style="top:495.1px;font-size:20.9px;line-height:27px;color:#f4f4f5;left:2093.0px;">Meguro Terrace</span>
<span class="t" style="top:493.6px;font-size:18px;line-height:23px;color:#10ca91;font-family:'DejaVu Sans Mono','Liberation Mono',monospace;right:57.6px;">+13.3%</span>
<span class="t" style="top:533.1px;font-size:20.9px;line-height:27px;color:#f4f4f5;left:2093.0px;">Takadanobaba Square</span>
<span class="t" style="top:531.6px;font-size:18px;line-height:23px;color:#f86c6d;font-family:'DejaVu Sans Mono','Liberation Mono',monospace;right:57.6px;">−12.8%</span>
<span class="t" style="top:571.1px;font-size:20.9px;line-height:27px;color:#f4f4f5;left:2093.0px;">Namba Urban Center</span>
<span class="t" style="top:569.6px;font-size:18px;line-height:23px;color:#f86c6d;font-family:'DejaVu Sans Mono','Liberation Mono',monospace;right:57.6px;">−12.7%</span>
<span class="t" style="top:609.1px;font-size:20.9px;line-height:27px;color:#f4f4f5;left:2093.0px;">Marunouchi Gate Tower</span>
<span class="t" style="top:607.6px;font-size:18px;line-height:23px;color:#10ca91;font-family:'DejaVu Sans Mono','Liberation Mono',monospace;right:57.6px;">+11.2%</span>
<div class="b" style="left:2080.0px;top:654.0px;width:754.0px;height:2.0px;background:#2e2e34;"></div>
<span class="t" style="top:669.1px;font-size:20.6px;line-height:27px;color:#c2c2ca;font-weight:700;left:2081.0px;">Rent/Tsubo Variance (MoM)</span>
<span class="t" style="top:670.1px;font-size:18.7px;line-height:24px;color:#8a8a95;right:47.0px;">1 Asset</span>
<span class="t" style="top:707.3px;font-size:20.9px;line-height:27px;color:#f4f4f5;left:2093.0px;">Shinjuku North Plaza</span>
<span class="t" style="top:705.8px;font-size:18px;line-height:23px;color:#f86c6d;font-family:'DejaVu Sans Mono','Liberation Mono',monospace;right:57.6px;">−14.9%</span>
<span class="t" style="top:705.8px;font-size:18px;line-height:23px;color:#9a9aa5;font-family:'DejaVu Sans Mono','Liberation Mono',monospace;right:151.9px;">¥31,590</span>
<div class="b" style="left:2080.0px;top:752.0px;width:754.0px;height:2.0px;background:#2e2e34;"></div>
<span class="t" style="top:767.2px;font-size:20.6px;line-height:27px;color:#c2c2ca;font-weight:700;left:2081.0px;">Occupancy Alert</span>
<span class="t" style="top:768.2px;font-size:18.7px;line-height:24px;color:#8a8a95;right:47.0px;">9 Assets</span>
<span class="t" style="top:805.1px;font-size:20.9px;line-height:27px;color:#f4f4f5;left:2093.0px;">Shinjuku North Plaza</span>
<span class="t" style="top:803.6px;font-size:18px;line-height:23px;color:#f86c6d;font-family:'DejaVu Sans Mono','Liberation Mono',monospace;right:57.6px;">−10%</span>
<span class="t" style="top:803.6px;font-size:18px;line-height:23px;color:#c4c4cc;font-family:'DejaVu Sans Mono','Liberation Mono',monospace;right:129.8px;">80.0%</span>
<span class="t" style="top:843.1px;font-size:20.9px;line-height:27px;color:#f4f4f5;left:2093.0px;">Sangenjaya Tower</span>
<span class="t" style="top:841.6px;font-size:18px;line-height:23px;color:#f86c6d;font-family:'DejaVu Sans Mono','Liberation Mono',monospace;right:57.6px;">−3%</span>
<span class="t" style="top:841.6px;font-size:18px;line-height:23px;color:#c4c4cc;font-family:'DejaVu Sans Mono','Liberation Mono',monospace;right:118.9px;">81.5%</span>
<span class="t" style="top:881.2px;font-size:20.9px;line-height:27px;color:#f4f4f5;left:2093.0px;">Takadanobaba Square</span>
<span class="t" style="top:879.7px;font-size:18px;line-height:23px;color:#f86c6d;font-family:'DejaVu Sans Mono','Liberation Mono',monospace;right:57.6px;">−8%</span>
<span class="t" style="top:879.7px;font-size:18px;line-height:23px;color:#c4c4cc;font-family:'DejaVu Sans Mono','Liberation Mono',monospace;right:118.9px;">81.8%</span>
<span class="t" style="top:919.2px;font-size:20.9px;line-height:27px;color:#f4f4f5;left:2093.0px;">Namba Urban Center</span>
<span class="t" style="top:917.7px;font-size:18px;line-height:23px;color:#f86c6d;font-family:'DejaVu Sans Mono','Liberation Mono',monospace;right:57.6px;">−4%</span>
<span class="t" style="top:917.7px;font-size:18px;line-height:23px;color:#c4c4cc;font-family:'DejaVu Sans Mono','Liberation Mono',monospace;right:118.9px;">85.8%</span>
<span class="t" style="top:957.3px;font-size:20.9px;line-height:27px;color:#f4f4f5;left:2093.0px;">Shibaura Bay Office</span>
<span class="t" style="top:955.8px;font-size:18px;line-height:23px;color:#f86c6d;font-family:'DejaVu Sans Mono','Liberation Mono',monospace;right:57.6px;">−4%</span>
<span class="t" style="top:955.8px;font-size:18px;line-height:23px;color:#c4c4cc;font-family:'DejaVu Sans Mono','Liberation Mono',monospace;right:118.9px;">88.0%</span>
<span class="t" style="top:995.3px;font-size:20.9px;line-height:27px;color:#f4f4f5;left:2093.0px;">Kyobashi Station Complex</span>
<span class="t" style="top:993.8px;font-size:18px;line-height:23px;color:#10ca91;font-family:'DejaVu Sans Mono','Liberation Mono',monospace;right:57.6px;">+18%</span>
<span class="t" style="top:993.8px;font-size:18px;line-height:23px;color:#c4c4cc;font-family:'DejaVu Sans Mono','Liberation Mono',monospace;right:129.8px;">92.8%</span>
<span class="t" style="top:1033.3px;font-size:20.9px;line-height:27px;color:#f4f4f5;left:2093.0px;">Marunouchi Gate Tower</span>
<span class="t" style="top:1031.8px;font-size:18px;line-height:23px;color:#10ca91;font-family:'DejaVu Sans Mono','Liberation Mono',monospace;right:57.6px;">+10%</span>
<span class="t" style="top:1031.8px;font-size:18px;line-height:23px;color:#c4c4cc;font-family:'DejaVu Sans Mono','Liberation Mono',monospace;right:129.8px;">95.0%</span>
<span class="t" style="top:1071.4px;font-size:20.9px;line-height:27px;color:#f4f4f5;left:2093.0px;">Meguro Terrace</span>
<span class="t" style="top:1069.9px;font-size:18px;line-height:23px;color:#10ca91;font-family:'DejaVu Sans Mono','Liberation Mono',monospace;right:57.6px;">+11%</span>
<span class="t" style="top:1069.9px;font-size:18px;line-height:23px;color:#c4c4cc;font-family:'DejaVu Sans Mono','Liberation Mono',monospace;right:129.8px;">97.3%</span>
<span class="t" style="top:1109.4px;font-size:20.9px;line-height:27px;color:#f4f4f5;left:2093.0px;">Minami-Aoyama Court</span>
<span class="t" style="top:1107.9px;font-size:18px;line-height:23px;color:#10ca91;font-family:'DejaVu Sans Mono','Liberation Mono',monospace;right:57.6px;">+12%</span>
<span class="t" style="top:1107.9px;font-size:18px;line-height:23px;color:#c4c4cc;font-family:'DejaVu Sans Mono','Liberation Mono',monospace;right:129.8px;">98.0%</span>
<div class="b" style="left:2080.0px;top:1154.0px;width:754.0px;height:2.0px;background:#2e2e34;"></div>
<span class="t" style="top:1169.4px;font-size:20.6px;line-height:27px;color:#c2c2ca;font-weight:700;left:2081.0px;">High Turnover (&gt;10%)</span>
<span class="t" style="top:1207.1px;font-size:18.9px;line-height:25px;color:#8a8a95;left:2093.0px;">No issues</span>
<div class="b" style="left:2080.0px;top:1247.5px;width:754.0px;height:2.0px;background:#2e2e34;"></div>
<span class="t" style="top:1263.5px;font-size:20.6px;line-height:27px;color:#c2c2ca;font-weight:700;left:2081.0px;">Leases Expiring (90d)</span>
<span class="t" style="top:1264.5px;font-size:18.7px;line-height:24px;color:#8a8a95;right:47.0px;">16 Assets</span>
<span class="t" style="top:1265.5px;font-size:18.6px;line-height:24px;color:#686873;left:2617.4px;transform:translateX(-50%);">30d</span>
<span class="t" style="top:1265.5px;font-size:18.6px;line-height:24px;color:#686873;left:2667.4px;transform:translateX(-50%);">60d</span>
<div class="b" style="left:2694.4px;top:1264.0px;width:47.5px;height:28.0px;background:#1e3256;border-radius:8px;"></div>
<span class="t" style="top:1265.5px;font-size:18.6px;line-height:24px;color:#7db4fb;left:2718.2px;transform:translateX(-50%);">90d</span>
<span class="t" style="top:1301.3px;font-size:20.9px;line-height:27px;color:#f4f4f5;left:2093.0px;">Meguro Terrace</span>
<span class="t" style="top:1302.1px;font-size:18px;line-height:23px;color:#f86c6d;font-family:'DejaVu Sans Mono','Liberation Mono',monospace;right:57.6px;">18.1%</span>
<span class="t" style="top:1302.1px;font-size:18px;line-height:23px;color:#c4c4cc;font-family:'DejaVu Sans Mono','Liberation Mono',monospace;right:129.3px;">9 Leases</span>
<span class="t" style="top:1339.3px;font-size:20.9px;line-height:27px;color:#f4f4f5;left:2093.0px;">Yoyogi Heights</span>
<span class="t" style="top:1340.1px;font-size:18px;line-height:23px;color:#f86c6d;font-family:'DejaVu Sans Mono','Liberation Mono',monospace;right:57.6px;">20.2%</span>
<span class="t" style="top:1340.1px;font-size:18px;line-height:23px;color:#c4c4cc;font-family:'DejaVu Sans Mono','Liberation Mono',monospace;right:129.3px;">8 Leases</span>
<span class="t" style="top:1377.3px;font-size:20.9px;line-height:27px;color:#f4f4f5;left:2093.0px;">Roppongi Hills Residence</span>
<span class="t" style="top:1378.1px;font-size:18px;line-height:23px;color:#f86c6d;font-family:'DejaVu Sans Mono','Liberation Mono',monospace;right:57.6px;">20.8%</span>
<span class="t" style="top:1378.1px;font-size:18px;line-height:23px;color:#c4c4cc;font-family:'DejaVu Sans Mono','Liberation Mono',monospace;right:129.3px;">6 Leases</span>
<span class="t" style="top:1415.3px;font-size:20.9px;line-height:27px;color:#f4f4f5;left:2093.0px;">Sangenjaya Tower</span>
<span class="t" style="top:1416.1px;font-size:18px;line-height:23px;color:#f86c6d;font-family:'DejaVu Sans Mono','Liberation Mono',monospace;right:57.6px;">19.0%</span>
<span class="t" style="top:1416.1px;font-size:18px;line-height:23px;color:#c4c4cc;font-family:'DejaVu Sans Mono','Liberation Mono',monospace;right:129.3px;">5 Leases</span>
<span class="t" style="top:1453.3px;font-size:20.9px;line-height:27px;color:#f4f4f5;left:2093.0px;">Takadanobaba Square</span>
<span class="t" style="top:1454.1px;font-size:18px;line-height:23px;color:#f86c6d;font-family:'DejaVu Sans Mono','Liberation Mono',monospace;right:57.6px;">14.3%</span>
<span class="t" style="top:1454.1px;font-size:18px;line-height:23px;color:#c4c4cc;font-family:'DejaVu Sans Mono','Liberation Mono',monospace;right:129.3px;">5 Leases</span>
<span class="t" style="top:1491.2px;font-size:20.9px;line-height:27px;color:#f4f4f5;left:2093.0px;">Ikebukuro Grand</span>
<span class="t" style="top:1492.0px;font-size:18px;line-height:23px;color:#f86c6d;font-family:'DejaVu Sans Mono','Liberation Mono',monospace;right:57.6px;">17.6%</span>
<span class="t" style="top:1492.0px;font-size:18px;line-height:23px;color:#c4c4cc;font-family:'DejaVu Sans Mono','Liberation Mono',monospace;right:129.3px;">5 Leases</span>
<span class="t" style="top:1529.2px;font-size:20.9px;line-height:27px;color:#f4f4f5;left:2093.0px;">Shinagawa Seaside</span>
<span class="t" style="top:1530.0px;font-size:18px;line-height:23px;color:#f86c6d;font-family:'DejaVu Sans Mono','Liberation Mono',monospace;right:57.6px;">11.8%</span>
<span class="t" style="top:1530.0px;font-size:18px;line-height:23px;color:#c4c4cc;font-family:'DejaVu Sans Mono','Liberation Mono',monospace;right:129.3px;">4 Leases</span>
<span class="t" style="top:1567.2px;font-size:20.9px;line-height:27px;color:#f4f4f5;left:2093.0px;">Kyobashi Station Complex</span>
<span class="t" style="top:1568.0px;font-size:18px;line-height:23px;color:#f86c6d;font-family:'DejaVu Sans Mono','Liberation Mono',monospace;right:57.6px;">37.5%</span>
<span class="t" style="top:1568.0px;font-size:18px;line-height:23px;color:#c4c4cc;font-family:'DejaVu Sans Mono','Liberation Mono',monospace;right:129.3px;">4 Leases</span>
<span class="t" style="top:1605.2px;font-size:20.9px;line-height:27px;color:#f4f4f5;left:2093.0px;">Minami-Aoyama Court</span>
<span class="t" style="top:1606.0px;font-size:18px;line-height:23px;color:#f86c6d;font-family:'DejaVu Sans Mono','Liberation Mono',monospace;right:57.6px;">9.6%</span>
<span class="t" style="top:1606.0px;font-size:18px;line-height:23px;color:#c4c4cc;font-family:'DejaVu Sans Mono','Liberation Mono',monospace;right:118.5px;">3 Leases</span>
<span class="t" style="top:1643.2px;font-size:20.9px;line-height:27px;color:#f4f4f5;left:2093.0px;">Marunouchi Gate Tower</span>
<span class="t" style="top:1644.0px;font-size:18px;line-height:23px;color:#f86c6d;font-family:'DejaVu Sans Mono','Liberation Mono',monospace;right:57.6px;">15.1%</span>
<span class="t" style="top:1644.0px;font-size:18px;line-height:23px;color:#c4c4cc;font-family:'DejaVu Sans Mono','Liberation Mono',monospace;right:129.3px;">3 Leases</span>
<span class="t" style="top:1693.6px;font-size:18.6px;line-height:24px;color:#8a8a95;left:2093.0px;">Show all (16)</span>
<div class="b" style="left:2060.0px;top:1748.6px;width:794.0px;height:1.6px;background:#2a2a30;"></div>
<span class="t" style="top:1765.5px;font-size:16px;line-height:21px;color:#f4f4f5;font-weight:700;letter-spacing:0.5px;left:2081.0px;">BUDGET VS ACTUAL</span>
<div class="b" style="left:2267.8px;top:1762.0px;width:91.5px;height:30.0px;background:#1c2a47;border-radius:8px;"></div>
<span class="t" style="top:1765.5px;font-size:16px;line-height:21px;color:#2f6fe4;font-family:'DejaVu Sans Mono','Liberation Mono',monospace;left:2313.5px;transform:translateX(-50%);">Feb 2025</span>
<svg class="b" style="left:0;top:0" width="2880" height="1800"><polygon points="2744.7,397.9 2753.5,397.9 2749.1,389.5" fill="#10ca91"/><polygon points="2745.1,429.5 2753.1,429.5 2749.1,437.1" fill="#f86c6d"/><polygon points="2744.7,473.9 2753.5,473.9 2749.1,465.5" fill="#10ca91"/><polygon points="2744.7,512.0 2753.5,512.0 2749.1,503.6" fill="#10ca91"/><polygon points="2745.1,543.6 2753.1,543.6 2749.1,551.2" fill="#f86c6d"/><polygon points="2745.1,581.6 2753.1,581.6 2749.1,589.2" fill="#f86c6d"/><polygon points="2744.7,626.0 2753.5,626.0 2749.1,617.6" fill="#10ca91"/><polygon points="2745.1,717.8 2753.1,717.8 2749.1,725.4" fill="#f86c6d"/><polygon points="2766.7,815.6 2774.7,815.6 2770.7,823.2" fill="#f86c6d"/><polygon points="2777.6,853.6 2785.6,853.6 2781.6,861.2" fill="#f86c6d"/><polygon points="2777.6,891.7 2785.6,891.7 2781.6,899.3" fill="#f86c6d"/><polygon points="2777.6,929.7 2785.6,929.7 2781.6,937.3" fill="#f86c6d"/><polygon points="2777.6,967.8 2785.6,967.8 2781.6,975.4" fill="#f86c6d"/><polygon points="2766.3,1012.2 2775.1,1012.2 2770.7,1003.8" fill="#10ca91"/><polygon points="2766.3,1050.2 2775.1,1050.2 2770.7,1041.8" fill="#10ca91"/><polygon points="2766.3,1088.3 2775.1,1088.3 2770.7,1079.9" fill="#10ca91"/><polygon points="2766.3,1126.3 2775.1,1126.3 2770.7,1117.9" fill="#10ca91"/></svg>
</div></div>
</div></body></html>
